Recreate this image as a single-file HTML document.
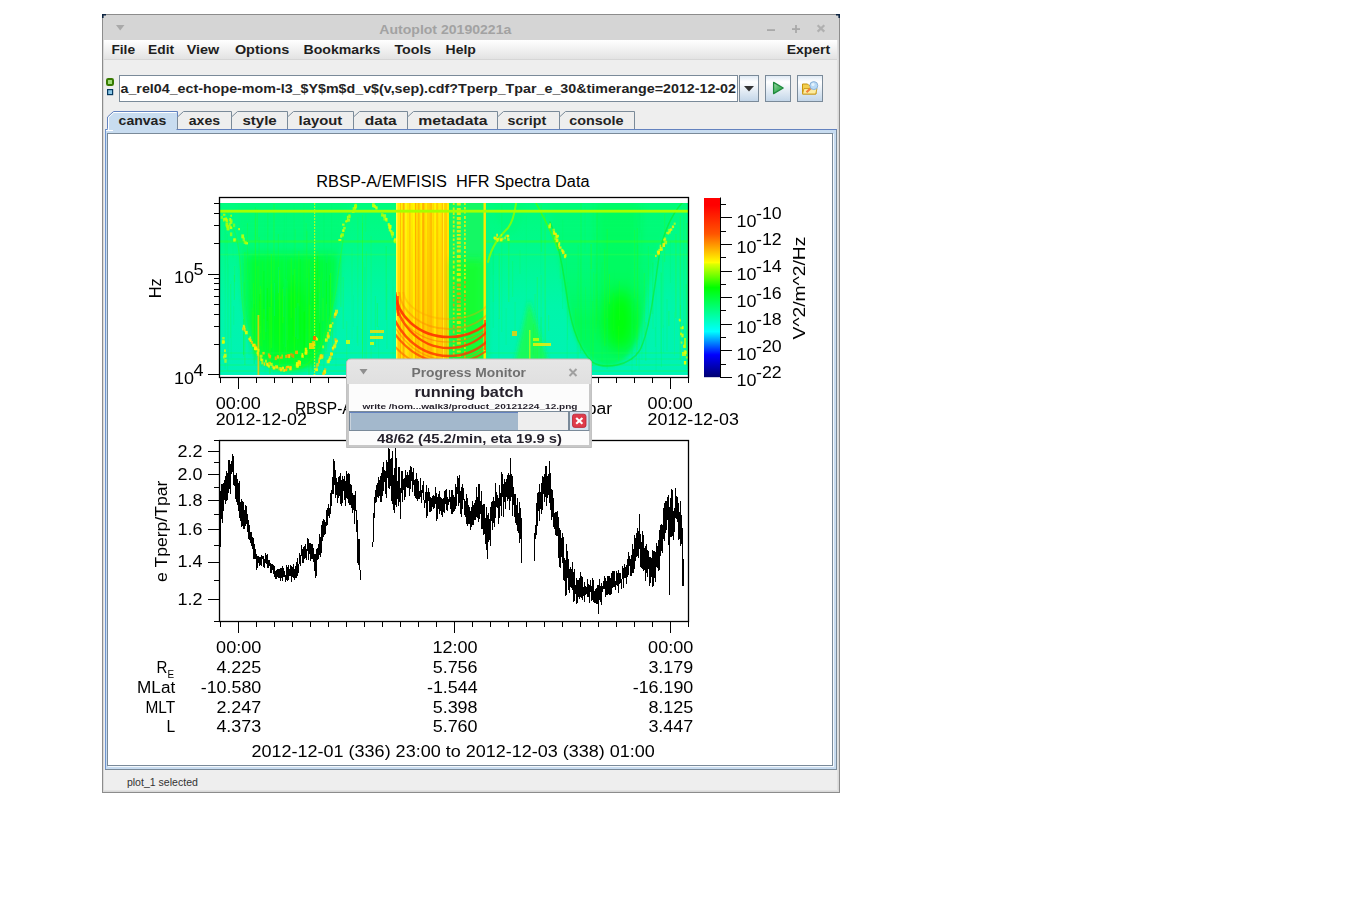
<!DOCTYPE html>
<html><head><meta charset="utf-8"><style>
html,body{margin:0;padding:0;background:#fff;width:1345px;height:916px;overflow:hidden}
svg{display:block}
text{font-family:"Liberation Sans",sans-serif;white-space:pre}
</style></head><body>
<svg width="1345" height="916" viewBox="0 0 1345 916" font-family="Liberation Sans, sans-serif"><defs>
<linearGradient id="menuG" x1="0" y1="0" x2="0" y2="1"><stop offset="0" stop-color="#ffffff"/><stop offset="1" stop-color="#e3e3e3"/></linearGradient>
<linearGradient id="btnG" x1="0" y1="0" x2="0" y2="1"><stop offset="0" stop-color="#dde8f3"/><stop offset="0.25" stop-color="#ffffff"/><stop offset="1" stop-color="#c2d5e8"/></linearGradient>
<linearGradient id="dlgT" x1="0" y1="0" x2="0" y2="1"><stop offset="0" stop-color="#e6e6e6"/><stop offset="1" stop-color="#cfcfcf"/></linearGradient>
<linearGradient id="cbar" x1="0" y1="0" x2="0" y2="1">
 <stop offset="0" stop-color="#ff0000"/><stop offset="0.04" stop-color="#ff0000"/>
 <stop offset="0.20" stop-color="#ff5500"/>
 <stop offset="0.36" stop-color="#ffff00"/>
 <stop offset="0.37" stop-color="#ddff00"/>
 <stop offset="0.50" stop-color="#00ff00"/>
 <stop offset="0.745" stop-color="#00ffff"/>
 <stop offset="0.875" stop-color="#0000ff"/>
 <stop offset="1" stop-color="#000070"/>
</linearGradient>
</defs>
<rect x="0" y="0" width="1345" height="916" fill="#ffffff" />
<rect x="102" y="14" width="738" height="779" fill="#8c8c8c" />
<rect x="103" y="15" width="736" height="777" fill="#d9d9d9" />
<rect x="104" y="40" width="734" height="751" fill="#eeeeee" />
<rect x="103" y="15" width="736" height="25" fill="#d5d5d5" />
<path d="M102 14 h4 v1.6 h-2.4 v2.4 h-1.6z" fill="#0c2340"/>
<path d="M840 14 h-4 v1.6 h2.4 v2.4 h1.6z" fill="#0c2340"/>
<path d="M116 25 L124.5 25 L120.2 30.5 Z" fill="#a9a9a9"/>
<text x="379.3" y="33.8" font-size="13" font-weight="bold" fill="#a2a2a2" text-anchor="start" textLength="132.0" lengthAdjust="spacingAndGlyphs" >Autoplot 20190221a</text>
<rect x="767" y="29.2" width="8" height="1.8" fill="#a9a9a9"/>
<rect x="792" y="28.2" width="8" height="1.8" fill="#a9a9a9"/><rect x="795.1" y="25" width="1.8" height="8" fill="#a9a9a9"/>
<path d="M817.6 25.2 L824.3 31.6 M824.3 25.2 L817.6 31.6" stroke="#b0b0b0" stroke-width="2.2"/>
<rect x="104" y="40" width="733" height="19" fill="url(#menuG)" />
<line x1="104" y1="59.5" x2="838" y2="59.5" stroke="#d6d6d6" stroke-width="1"/>
<text x="111.4" y="53.7" font-size="12.5" font-weight="bold" fill="#1e1e1e" text-anchor="start" textLength="23.7" lengthAdjust="spacingAndGlyphs" >File</text>
<text x="148.1" y="53.7" font-size="12.5" font-weight="bold" fill="#1e1e1e" text-anchor="start" textLength="26.0" lengthAdjust="spacingAndGlyphs" >Edit</text>
<text x="186.8" y="53.7" font-size="12.5" font-weight="bold" fill="#1e1e1e" text-anchor="start" textLength="32.5" lengthAdjust="spacingAndGlyphs" >View</text>
<text x="234.9" y="53.7" font-size="12.5" font-weight="bold" fill="#1e1e1e" text-anchor="start" textLength="54.5" lengthAdjust="spacingAndGlyphs" >Options</text>
<text x="303.5" y="53.7" font-size="12.5" font-weight="bold" fill="#1e1e1e" text-anchor="start" textLength="76.9" lengthAdjust="spacingAndGlyphs" >Bookmarks</text>
<text x="394.4" y="53.7" font-size="12.5" font-weight="bold" fill="#1e1e1e" text-anchor="start" textLength="36.9" lengthAdjust="spacingAndGlyphs" >Tools</text>
<text x="445.5" y="53.7" font-size="12.5" font-weight="bold" fill="#1e1e1e" text-anchor="start" textLength="30.4" lengthAdjust="spacingAndGlyphs" >Help</text>
<text x="786.7" y="53.7" font-size="12.5" font-weight="bold" fill="#1e1e1e" text-anchor="start" textLength="43.5" lengthAdjust="spacingAndGlyphs" >Expert</text>
<rect x="107" y="79" width="6" height="6" rx="1.2" fill="#a0dc78" stroke="#377a00" stroke-width="2"/>
<rect x="107.6" y="89.6" width="5" height="5" fill="#8cc8e8" stroke="#063a62" stroke-width="1.2"/>
<rect x="119.5" y="75.5" width="618" height="26" fill="#ffffff" stroke="#7a8a99" stroke-width="1"/>
<line x1="120.5" y1="77" x2="120.5" y2="101" stroke="#ffffff" stroke-width="1"/>
<text x="120.5" y="93.0" font-size="13" font-weight="bold" fill="#222222" text-anchor="start" textLength="615.5" lengthAdjust="spacingAndGlyphs" >a_rel04_ect-hope-mom-l3_$Y$m$d_v$(v,sep).cdf?Tperp_Tpar_e_30&amp;timerange=2012-12-02</text>
<rect x="739.5" y="75.5" width="19" height="26" fill="url(#btnG)" stroke="#7a8a99" stroke-width="1"/>
<path d="M744 86 L754 86 L749 91.5 Z" fill="#333333"/>
<rect x="765.5" y="75.5" width="25" height="26" fill="url(#btnG)" stroke="#7a8a99" stroke-width="1"/>
<linearGradient id="playG" x1="0" y1="0" x2="1" y2="1"><stop offset="0" stop-color="#a8dcb0"/><stop offset="0.5" stop-color="#4fb866"/><stop offset="1" stop-color="#2f9a48"/></linearGradient>
<path d="M773.6 82.4 L783.2 88.0 L773.6 93.6 Z" fill="url(#playG)" stroke="#1e8a3c" stroke-width="1.3" stroke-linejoin="round"/>
<rect x="797.5" y="75.5" width="25" height="26" fill="url(#btnG)" stroke="#7a8a99" stroke-width="1"/>
<path d="M802.5 84 h5 l1.5 1.5 h7 v8.5 h-13.5 z" fill="#f3cf50" stroke="#c8960e" stroke-width="1"/>
<path d="M804 88.5 h13 l-1.3 5.5 h-13.2 z" fill="#fdeca0" stroke="#c8960e" stroke-width="0.8"/>
<line x1="806.5" y1="92.2" x2="811" y2="88" stroke="#f0823a" stroke-width="2.2"/>
<circle cx="813.8" cy="85.6" r="4" fill="#b8daf6" stroke="#86acd2" stroke-width="0.9"/>
<circle cx="813" cy="84.6" r="1.6" fill="#e4f2fd"/>
<path d="M107.5 130 L107.5 117 L113.5 111.5 L177.5 111.5 L177.5 130" fill="#c8dcf0" stroke="#6382bf" stroke-width="1"/>
<text x="118.6" y="124.8" font-size="12.5" font-weight="bold" fill="#222222" text-anchor="start" textLength="47.6" lengthAdjust="spacingAndGlyphs" >canvas</text>
<path d="M177.5 130 L177.5 117 L183.5 111.5 L231.5 111.5 L231.5 130" fill="#eeeeee" stroke="#7a8a99" stroke-width="1"/>
<text x="188.8" y="124.8" font-size="12.5" font-weight="bold" fill="#222222" text-anchor="start" textLength="31.3" lengthAdjust="spacingAndGlyphs" >axes</text>
<path d="M231.5 130 L231.5 117 L237.5 111.5 L287.5 111.5 L287.5 130" fill="#eeeeee" stroke="#7a8a99" stroke-width="1"/>
<text x="242.4" y="124.8" font-size="12.5" font-weight="bold" fill="#222222" text-anchor="start" textLength="34.3" lengthAdjust="spacingAndGlyphs" >style</text>
<path d="M287.5 130 L287.5 117 L293.5 111.5 L353.5 111.5 L353.5 130" fill="#eeeeee" stroke="#7a8a99" stroke-width="1"/>
<text x="298.6" y="124.8" font-size="12.5" font-weight="bold" fill="#222222" text-anchor="start" textLength="43.6" lengthAdjust="spacingAndGlyphs" >layout</text>
<path d="M353.5 130 L353.5 117 L359.5 111.5 L407.5 111.5 L407.5 130" fill="#eeeeee" stroke="#7a8a99" stroke-width="1"/>
<text x="364.8" y="124.8" font-size="12.5" font-weight="bold" fill="#222222" text-anchor="start" textLength="31.9" lengthAdjust="spacingAndGlyphs" >data</text>
<path d="M407.5 130 L407.5 117 L413.5 111.5 L497.5 111.5 L497.5 130" fill="#eeeeee" stroke="#7a8a99" stroke-width="1"/>
<text x="418.3" y="124.8" font-size="12.5" font-weight="bold" fill="#222222" text-anchor="start" textLength="69.2" lengthAdjust="spacingAndGlyphs" >metadata</text>
<path d="M497.5 130 L497.5 117 L503.5 111.5 L559.5 111.5 L559.5 130" fill="#eeeeee" stroke="#7a8a99" stroke-width="1"/>
<text x="507.5" y="124.8" font-size="12.5" font-weight="bold" fill="#222222" text-anchor="start" textLength="38.7" lengthAdjust="spacingAndGlyphs" >script</text>
<path d="M559.5 130 L559.5 117 L565.5 111.5 L634.5 111.5 L634.5 130" fill="#eeeeee" stroke="#7a8a99" stroke-width="1"/>
<text x="569.2" y="124.8" font-size="12.5" font-weight="bold" fill="#222222" text-anchor="start" textLength="54.3" lengthAdjust="spacingAndGlyphs" >console</text>
<rect x="105.5" y="129.5" width="731" height="640" fill="#c8dcf0" stroke="#7a8a99" stroke-width="1"/>
<line x1="105" y1="129.5" x2="837" y2="129.5" stroke="#6382bf" stroke-width="1"/>
<line x1="105.5" y1="129" x2="105.5" y2="769" stroke="#6f95d0" stroke-width="1"/>
<rect x="107.5" y="128.5" width="69" height="2" fill="#c8dcf0" />
<path d="M108.5 130.5 L108.5 117.5 L113.8 112.5 L176.5 112.5" fill="none" stroke="#ffffff" stroke-width="1"/>
<line x1="106" y1="130.5" x2="113" y2="130.5" stroke="#ffffff" stroke-width="1"/>
<rect x="107.5" y="133.5" width="725" height="632" fill="#ffffff" stroke="#7a8a99" stroke-width="1"/>
<line x1="108" y1="766.5" x2="834" y2="766.5" stroke="#f4f8fc" stroke-width="1"/>
<line x1="833.5" y1="134" x2="833.5" y2="767" stroke="#f4f8fc" stroke-width="1"/>
<rect x="837" y="40" width="1" height="751" fill="#e2e2e2" />
<rect x="104" y="790" width="734" height="1" fill="#e2e2e2" />
<text x="126.9" y="786.0" font-size="11" font-weight="normal" fill="#333333" text-anchor="start" textLength="71.0" lengthAdjust="spacingAndGlyphs" >plot_1 selected</text>
<text x="316.3" y="186.9" font-size="16" font-weight="normal" fill="#000" text-anchor="start" textLength="273.2" lengthAdjust="spacingAndGlyphs" >RBSP-A/EMFISIS  HFR Spectra Data</text>
<g id="spec">
<defs>
<clipPath id="specClip"><rect x="220" y="203" width="468" height="172"/></clipPath>
<clipPath id="bandClip"><rect x="396" y="292" width="90" height="83"/></clipPath>
<linearGradient id="bgG" x1="0" y1="203" x2="0" y2="375" gradientUnits="userSpaceOnUse">
 <stop offset="0" stop-color="rgb(0,252,125)"/><stop offset="0.25" stop-color="rgb(0,250,140)"/>
 <stop offset="0.6" stop-color="rgb(0,246,170)"/><stop offset="1" stop-color="rgb(0,242,182)"/></linearGradient>
<linearGradient id="uG" x1="0" y1="203" x2="0" y2="375" gradientUnits="userSpaceOnUse">
 <stop offset="0" stop-color="rgb(0,252,90)" stop-opacity="0.15"/><stop offset="0.35" stop-color="rgb(0,252,85)" stop-opacity="0.45"/>
 <stop offset="0.7" stop-color="rgb(0,252,70)" stop-opacity="0.8"/><stop offset="1" stop-color="rgb(0,252,80)" stop-opacity="0.75"/></linearGradient>
<linearGradient id="bandG" x1="0" y1="203" x2="0" y2="375" gradientUnits="userSpaceOnUse">
 <stop offset="0" stop-color="#ffef00"/><stop offset="0.45" stop-color="#ffdc00"/><stop offset="1" stop-color="#ffc400"/></linearGradient>
<filter id="bl2" x="-20%" y="-20%" width="140%" height="140%"><feGaussianBlur stdDeviation="2"/></filter>
<filter id="bl4" x="-30%" y="-30%" width="160%" height="160%"><feGaussianBlur stdDeviation="4"/></filter>
<filter id="bl8" x="-50%" y="-50%" width="200%" height="200%"><feGaussianBlur stdDeviation="8"/></filter>
</defs>
<g clip-path="url(#specClip)">
<rect x="220" y="203" width="468" height="172" fill="url(#bgG)"/>
<g filter="url(#bl2)">
<path d="M238 203 C241 260, 240 320, 256 352 C268 372, 300 376, 318 362 C330 340, 337 290, 346 203 Z" fill="url(#uG)"/>
<path d="M548 203 C558 240, 564 300, 575 335 C585 360, 600 368, 612 366 C630 362, 640 340, 646 300 C652 260, 662 230, 682 203 Z" fill="url(#uG)"/>
<path d="M492 203 C500 240, 520 250, 525 203 Z" fill="rgb(0,252,110)" opacity="0.3"/>
<path d="M529 300 L552 375 L512 375 Z" fill="rgb(40,255,40)" opacity="0.6"/>
</g>
<g filter="url(#bl4)">
<path d="M596 203 L640 203 C638 260, 636 300, 628 345 C618 352, 606 348, 602 320 C599 280, 597 240, 596 203 Z" fill="rgb(0,255,40)" opacity="0.3"/>
<path d="M246 255 L336 255 C334 320, 326 350, 312 364 C296 374, 268 372, 256 352 C250 320, 247 290, 246 255 Z" fill="rgb(0,255,30)" opacity="0.65"/>
</g>
<g filter="url(#bl8)">
<ellipse cx="620" cy="320" rx="14" ry="30" fill="rgb(0,255,0)" opacity="0.9"/>
<ellipse cx="288" cy="320" rx="22" ry="36" fill="rgb(0,255,0)" opacity="0.45"/>
</g>
<rect x="220" y="352" width="468" height="2" fill="rgb(20,255,80)" opacity="0.25"/>
<rect x="220" y="358" width="468" height="2" fill="rgb(20,255,80)" opacity="0.2"/>
<rect x="220" y="364" width="468" height="2" fill="rgb(20,255,80)" opacity="0.25"/>
<rect x="220" y="370" width="468" height="2" fill="rgb(20,255,80)" opacity="0.3"/>
<rect x="220" y="240.3" width="468" height="2.4" fill="rgb(50,255,40)" opacity="0.5"/>
<rect x="220" y="253.8" width="468" height="1.6" fill="rgb(60,255,60)" opacity="0.28"/>
<rect x="652.5" y="262" width="1" height="67" fill="rgb(60,255,0)" opacity="0.15"/>
<rect x="596.2" y="263" width="1" height="77" fill="rgb(30,255,30)" opacity="0.12"/>
<rect x="362.0" y="215" width="1" height="137" fill="rgb(60,255,0)" opacity="0.26"/>
<rect x="498.7" y="253" width="1" height="66" fill="rgb(60,255,0)" opacity="0.25"/>
<rect x="293.7" y="205" width="1" height="100" fill="rgb(30,255,30)" opacity="0.11"/>
<rect x="631.6" y="279" width="1" height="82" fill="rgb(0,250,100)" opacity="0.21"/>
<rect x="614.3" y="269" width="1" height="77" fill="rgb(0,250,100)" opacity="0.10"/>
<rect x="259.8" y="286" width="1" height="47" fill="rgb(60,255,0)" opacity="0.35"/>
<rect x="613.2" y="293" width="1" height="38" fill="rgb(30,255,30)" opacity="0.23"/>
<rect x="233.9" y="275" width="1" height="25" fill="rgb(30,255,30)" opacity="0.31"/>
<rect x="668.4" y="311" width="1" height="15" fill="rgb(30,255,30)" opacity="0.33"/>
<rect x="244.5" y="251" width="1" height="96" fill="rgb(0,250,100)" opacity="0.12"/>
<rect x="514.6" y="302" width="1" height="32" fill="rgb(30,255,30)" opacity="0.18"/>
<rect x="227.1" y="255" width="1" height="116" fill="rgb(30,255,30)" opacity="0.16"/>
<rect x="267.3" y="211" width="1" height="138" fill="rgb(30,255,30)" opacity="0.27"/>
<rect x="308.2" y="268" width="1" height="111" fill="rgb(30,255,30)" opacity="0.20"/>
<rect x="683.3" y="203" width="1" height="155" fill="rgb(60,255,0)" opacity="0.18"/>
<rect x="634.1" y="230" width="1" height="68" fill="rgb(60,255,0)" opacity="0.26"/>
<rect x="267.0" y="329" width="1" height="23" fill="rgb(0,250,100)" opacity="0.10"/>
<rect x="505.6" y="308" width="1" height="37" fill="rgb(30,255,30)" opacity="0.12"/>
<rect x="492.7" y="234" width="1" height="94" fill="rgb(0,250,100)" opacity="0.26"/>
<rect x="279.5" y="278" width="1" height="88" fill="rgb(30,255,30)" opacity="0.32"/>
<rect x="305.6" y="223" width="1" height="144" fill="rgb(60,255,0)" opacity="0.16"/>
<rect x="308.8" y="297" width="1" height="79" fill="rgb(30,255,30)" opacity="0.27"/>
<rect x="256.7" y="209" width="1" height="32" fill="rgb(60,255,0)" opacity="0.34"/>
<rect x="331.6" y="292" width="1" height="34" fill="rgb(60,255,0)" opacity="0.22"/>
<rect x="654.9" y="327" width="1" height="20" fill="rgb(0,250,100)" opacity="0.24"/>
<rect x="618.9" y="281" width="1" height="39" fill="rgb(30,255,30)" opacity="0.29"/>
<rect x="252.4" y="255" width="1" height="42" fill="rgb(30,255,30)" opacity="0.14"/>
<rect x="392.6" y="276" width="1" height="27" fill="rgb(0,250,100)" opacity="0.13"/>
<rect x="374.9" y="296" width="1" height="51" fill="rgb(30,255,30)" opacity="0.25"/>
<rect x="652.2" y="263" width="1" height="51" fill="rgb(0,250,100)" opacity="0.34"/>
<rect x="229.9" y="284" width="1" height="54" fill="rgb(60,255,0)" opacity="0.18"/>
<rect x="283.9" y="212" width="1" height="84" fill="rgb(0,250,100)" opacity="0.28"/>
<rect x="641.3" y="297" width="1" height="63" fill="rgb(0,250,100)" opacity="0.19"/>
<rect x="540.6" y="317" width="1" height="56" fill="rgb(0,250,100)" opacity="0.34"/>
<rect x="234.2" y="266" width="1" height="16" fill="rgb(60,255,0)" opacity="0.20"/>
<rect x="492.7" y="280" width="1" height="22" fill="rgb(60,255,0)" opacity="0.13"/>
<rect x="340.4" y="256" width="1" height="51" fill="rgb(60,255,0)" opacity="0.27"/>
<rect x="365.2" y="214" width="1" height="18" fill="rgb(60,255,0)" opacity="0.13"/>
<rect x="585.0" y="287" width="1" height="53" fill="rgb(30,255,30)" opacity="0.19"/>
<rect x="287.0" y="281" width="1" height="59" fill="rgb(0,250,100)" opacity="0.26"/>
<rect x="637.3" y="245" width="1" height="95" fill="rgb(30,255,30)" opacity="0.26"/>
<rect x="596.1" y="299" width="1" height="28" fill="rgb(30,255,30)" opacity="0.20"/>
<rect x="492.9" y="243" width="1" height="32" fill="rgb(0,250,100)" opacity="0.19"/>
<rect x="639.2" y="208" width="1" height="25" fill="rgb(0,250,100)" opacity="0.31"/>
<rect x="272.8" y="263" width="1" height="110" fill="rgb(0,250,100)" opacity="0.20"/>
<rect x="534.6" y="294" width="1" height="75" fill="rgb(60,255,0)" opacity="0.21"/>
<rect x="254.9" y="207" width="1" height="153" fill="rgb(30,255,30)" opacity="0.27"/>
<rect x="351.5" y="248" width="1" height="91" fill="rgb(60,255,0)" opacity="0.10"/>
<rect x="283.6" y="261" width="1" height="18" fill="rgb(0,250,100)" opacity="0.16"/>
<rect x="285.9" y="209" width="1" height="113" fill="rgb(0,250,100)" opacity="0.13"/>
<rect x="519.5" y="250" width="1" height="24" fill="rgb(30,255,30)" opacity="0.15"/>
<rect x="303.6" y="204" width="1" height="91" fill="rgb(60,255,0)" opacity="0.11"/>
<rect x="326.0" y="302" width="1" height="49" fill="rgb(60,255,0)" opacity="0.23"/>
<rect x="686.5" y="223" width="1" height="135" fill="rgb(60,255,0)" opacity="0.33"/>
<rect x="260.8" y="321" width="1" height="46" fill="rgb(30,255,30)" opacity="0.21"/>
<rect x="312.1" y="316" width="1" height="15" fill="rgb(60,255,0)" opacity="0.24"/>
<rect x="631.5" y="304" width="1" height="72" fill="rgb(0,250,100)" opacity="0.18"/>
<rect x="679.7" y="216" width="1" height="144" fill="rgb(60,255,0)" opacity="0.33"/>
<rect x="277.8" y="234" width="1" height="66" fill="rgb(30,255,30)" opacity="0.34"/>
<rect x="590.1" y="244" width="1" height="125" fill="rgb(30,255,30)" opacity="0.19"/>
<rect x="258.7" y="259" width="1" height="73" fill="rgb(0,250,100)" opacity="0.22"/>
<rect x="233.3" y="306" width="1" height="19" fill="rgb(30,255,30)" opacity="0.14"/>
<rect x="376.8" y="303" width="1" height="24" fill="rgb(30,255,30)" opacity="0.35"/>
<rect x="641.5" y="269" width="1" height="80" fill="rgb(0,250,100)" opacity="0.34"/>
<rect x="664.2" y="214" width="1" height="48" fill="rgb(60,255,0)" opacity="0.24"/>
<rect x="609.0" y="274" width="1" height="30" fill="rgb(60,255,0)" opacity="0.31"/>
<rect x="365.9" y="251" width="1" height="111" fill="rgb(60,255,0)" opacity="0.15"/>
<rect x="618.2" y="326" width="1" height="35" fill="rgb(60,255,0)" opacity="0.22"/>
<rect x="273.5" y="204" width="1" height="76" fill="rgb(60,255,0)" opacity="0.34"/>
<rect x="594.9" y="274" width="1" height="59" fill="rgb(60,255,0)" opacity="0.14"/>
<rect x="655.6" y="261" width="1" height="110" fill="rgb(0,250,100)" opacity="0.17"/>
<rect x="279.4" y="258" width="1" height="102" fill="rgb(0,250,100)" opacity="0.23"/>
<rect x="270.8" y="256" width="1" height="18" fill="rgb(0,250,100)" opacity="0.13"/>
<rect x="584.7" y="206" width="1" height="46" fill="rgb(30,255,30)" opacity="0.10"/>
<rect x="352.9" y="295" width="1" height="32" fill="rgb(0,250,100)" opacity="0.13"/>
<rect x="562.1" y="219" width="1" height="90" fill="rgb(0,250,100)" opacity="0.28"/>
<rect x="548.2" y="315" width="1" height="16" fill="rgb(60,255,0)" opacity="0.20"/>
<rect x="294.8" y="229" width="1" height="101" fill="rgb(60,255,0)" opacity="0.15"/>
<rect x="321.2" y="272" width="1" height="70" fill="rgb(30,255,30)" opacity="0.16"/>
<rect x="566.7" y="306" width="1" height="68" fill="rgb(0,250,100)" opacity="0.25"/>
<rect x="636.8" y="228" width="1" height="122" fill="rgb(30,255,30)" opacity="0.32"/>
<rect x="282.7" y="233" width="1" height="111" fill="rgb(0,250,100)" opacity="0.20"/>
<rect x="660.5" y="272" width="1" height="81" fill="rgb(30,255,30)" opacity="0.20"/>
<rect x="540.7" y="205" width="1" height="47" fill="rgb(60,255,0)" opacity="0.19"/>
<rect x="604.2" y="249" width="1" height="97" fill="rgb(60,255,0)" opacity="0.29"/>
<rect x="540.9" y="227" width="1" height="25" fill="rgb(30,255,30)" opacity="0.11"/>
<rect x="576.6" y="281" width="1" height="91" fill="rgb(0,250,100)" opacity="0.14"/>
<rect x="306.4" y="229" width="1" height="129" fill="rgb(0,250,100)" opacity="0.33"/>
<rect x="264.6" y="211" width="1" height="162" fill="rgb(0,250,100)" opacity="0.12"/>
<rect x="265.3" y="253" width="1" height="63" fill="rgb(0,250,100)" opacity="0.21"/>
<rect x="501.2" y="205" width="1" height="127" fill="rgb(30,255,30)" opacity="0.15"/>
<rect x="566.0" y="254" width="1" height="37" fill="rgb(30,255,30)" opacity="0.12"/>
<rect x="590.8" y="244" width="1" height="25" fill="rgb(60,255,0)" opacity="0.32"/>
<rect x="645.3" y="322" width="1" height="39" fill="rgb(30,255,30)" opacity="0.23"/>
<rect x="679.9" y="305" width="1" height="30" fill="rgb(30,255,30)" opacity="0.29"/>
<rect x="584.1" y="306" width="1" height="39" fill="rgb(0,250,100)" opacity="0.32"/>
<rect x="545.2" y="300" width="1" height="64" fill="rgb(0,250,100)" opacity="0.15"/>
<rect x="306.5" y="304" width="1" height="33" fill="rgb(30,255,30)" opacity="0.10"/>
<rect x="386.4" y="284" width="1" height="65" fill="rgb(30,255,30)" opacity="0.17"/>
<rect x="669.9" y="241" width="1" height="42" fill="rgb(0,250,100)" opacity="0.24"/>
<rect x="687.9" y="285" width="1" height="71" fill="rgb(0,250,100)" opacity="0.35"/>
<rect x="230.7" y="281" width="1" height="77" fill="rgb(0,250,100)" opacity="0.21"/>
<rect x="576.3" y="285" width="1" height="16" fill="rgb(0,250,100)" opacity="0.16"/>
<rect x="643.8" y="273" width="1" height="62" fill="rgb(60,255,0)" opacity="0.24"/>
<rect x="685.7" y="284" width="1" height="81" fill="rgb(30,255,30)" opacity="0.24"/>
<rect x="532.8" y="324" width="1" height="31" fill="rgb(30,255,30)" opacity="0.20"/>
<rect x="674.0" y="312" width="1" height="44" fill="rgb(60,255,0)" opacity="0.11"/>
<rect x="662.4" y="256" width="1" height="72" fill="rgb(60,255,0)" opacity="0.18"/>
<rect x="346.2" y="321" width="1" height="44" fill="rgb(60,255,0)" opacity="0.17"/>
<rect x="226.6" y="234" width="1" height="21" fill="rgb(30,255,30)" opacity="0.20"/>
<rect x="540.3" y="210" width="1" height="64" fill="rgb(0,250,100)" opacity="0.11"/>
<rect x="682.7" y="323" width="1" height="18" fill="rgb(30,255,30)" opacity="0.21"/>
<rect x="675.4" y="234" width="1" height="84" fill="rgb(60,255,0)" opacity="0.33"/>
<rect x="287.6" y="325" width="1" height="25" fill="rgb(60,255,0)" opacity="0.13"/>
<rect x="512.1" y="261" width="1" height="36" fill="rgb(30,255,30)" opacity="0.19"/>
<rect x="292.4" y="249" width="1" height="31" fill="rgb(0,250,100)" opacity="0.21"/>
<rect x="342.7" y="277" width="1" height="52" fill="rgb(60,255,0)" opacity="0.23"/>
<rect x="686.9" y="324" width="1" height="45" fill="rgb(30,255,30)" opacity="0.22"/>
<rect x="364.4" y="267" width="1" height="98" fill="rgb(0,250,100)" opacity="0.17"/>
<rect x="540.6" y="275" width="1" height="68" fill="rgb(60,255,0)" opacity="0.17"/>
<rect x="332.1" y="324" width="1" height="36" fill="rgb(60,255,0)" opacity="0.33"/>
<rect x="631.3" y="208" width="1" height="25" fill="rgb(0,250,100)" opacity="0.16"/>
<rect x="232.6" y="208" width="1" height="50" fill="rgb(0,250,100)" opacity="0.12"/>
<rect x="260.5" y="289" width="1" height="57" fill="rgb(60,255,0)" opacity="0.35"/>
<rect x="385.7" y="246" width="1" height="74" fill="rgb(30,255,30)" opacity="0.31"/>
<rect x="254.8" y="218" width="1" height="134" fill="rgb(60,255,0)" opacity="0.31"/>
<rect x="579.9" y="259" width="1" height="94" fill="rgb(0,250,100)" opacity="0.30"/>
<rect x="392.7" y="286" width="1" height="93" fill="rgb(0,250,100)" opacity="0.17"/>
<rect x="575.2" y="308" width="1" height="25" fill="rgb(60,255,0)" opacity="0.19"/>
<rect x="265.4" y="314" width="1" height="19" fill="rgb(30,255,30)" opacity="0.21"/>
<rect x="601.6" y="262" width="1" height="100" fill="rgb(30,255,30)" opacity="0.12"/>
<rect x="319.8" y="287" width="1" height="21" fill="rgb(0,250,100)" opacity="0.22"/>
<rect x="577.6" y="245" width="1" height="121" fill="rgb(30,255,30)" opacity="0.19"/>
<rect x="559.8" y="250" width="1" height="29" fill="rgb(60,255,0)" opacity="0.21"/>
<rect x="498.4" y="318" width="1" height="48" fill="rgb(0,250,100)" opacity="0.21"/>
<rect x="595.8" y="242" width="1" height="54" fill="rgb(0,250,100)" opacity="0.34"/>
<rect x="561.5" y="269" width="1" height="23" fill="rgb(0,250,100)" opacity="0.11"/>
<rect x="536.8" y="277" width="1" height="85" fill="rgb(60,255,0)" opacity="0.24"/>
<rect x="593.0" y="272" width="1" height="93" fill="rgb(60,255,0)" opacity="0.14"/>
<rect x="262.0" y="261" width="1" height="104" fill="rgb(30,255,30)" opacity="0.16"/>
<rect x="247.0" y="223" width="1" height="57" fill="rgb(30,255,30)" opacity="0.26"/>
<rect x="596.4" y="211" width="1" height="99" fill="rgb(60,255,0)" opacity="0.12"/>
<rect x="258.2" y="297" width="1" height="76" fill="rgb(30,255,30)" opacity="0.11"/>
<rect x="525.9" y="215" width="1" height="137" fill="rgb(0,250,100)" opacity="0.16"/>
<rect x="323.2" y="300" width="1" height="49" fill="rgb(0,250,100)" opacity="0.20"/>
<rect x="378.1" y="326" width="1" height="41" fill="rgb(0,250,100)" opacity="0.22"/>
<rect x="596.6" y="212" width="1" height="109" fill="rgb(30,255,30)" opacity="0.20"/>
<rect x="606.7" y="288" width="1" height="81" fill="rgb(0,250,100)" opacity="0.31"/>
<rect x="635.9" y="325" width="1" height="41" fill="rgb(60,255,0)" opacity="0.19"/>
<rect x="224.7" y="217" width="1" height="152" fill="rgb(30,255,30)" opacity="0.16"/>
<rect x="295.9" y="284" width="1" height="71" fill="rgb(0,250,100)" opacity="0.15"/>
<rect x="356.7" y="326" width="1" height="17" fill="rgb(0,250,100)" opacity="0.28"/>
<rect x="362.0" y="223" width="1" height="146" fill="rgb(30,255,30)" opacity="0.29"/>
<rect x="228.0" y="264" width="1" height="96" fill="rgb(0,250,100)" opacity="0.13"/>
<rect x="306.4" y="231" width="1" height="47" fill="rgb(60,255,0)" opacity="0.22"/>
<rect x="638.6" y="254" width="1" height="116" fill="rgb(0,250,100)" opacity="0.26"/>
<rect x="660.9" y="273" width="1" height="94" fill="rgb(0,250,100)" opacity="0.32"/>
<rect x="647.9" y="246" width="1" height="80" fill="rgb(30,255,30)" opacity="0.22"/>
<rect x="323.4" y="209" width="1" height="163" fill="rgb(0,250,100)" opacity="0.34"/>
<rect x="591.9" y="301" width="1" height="65" fill="rgb(30,255,30)" opacity="0.26"/>
<rect x="331.2" y="204" width="1" height="91" fill="rgb(0,250,100)" opacity="0.21"/>
<rect x="335.4" y="257" width="1" height="110" fill="rgb(0,250,100)" opacity="0.14"/>
<rect x="370.6" y="236" width="1" height="127" fill="rgb(60,255,0)" opacity="0.13"/>
<rect x="567.1" y="282" width="1" height="58" fill="rgb(30,255,30)" opacity="0.14"/>
<rect x="580.5" y="203" width="1" height="148" fill="rgb(30,255,30)" opacity="0.31"/>
<rect x="258.6" y="237" width="1" height="107" fill="rgb(30,255,30)" opacity="0.32"/>
<rect x="544.6" y="214" width="1" height="128" fill="rgb(60,255,0)" opacity="0.31"/>
<rect x="362.1" y="303" width="1" height="41" fill="rgb(60,255,0)" opacity="0.12"/>
<rect x="606.7" y="229" width="1" height="89" fill="rgb(60,255,0)" opacity="0.22"/>
<rect x="663.0" y="325" width="1" height="28" fill="rgb(0,250,100)" opacity="0.12"/>
<rect x="363.1" y="262" width="1" height="88" fill="rgb(0,250,100)" opacity="0.12"/>
<rect x="285.8" y="288" width="1" height="67" fill="rgb(60,255,0)" opacity="0.34"/>
<rect x="608.3" y="286" width="1" height="16" fill="rgb(0,250,100)" opacity="0.28"/>
<rect x="357.3" y="217" width="1" height="129" fill="rgb(60,255,0)" opacity="0.15"/>
<rect x="508.3" y="240" width="1" height="62" fill="rgb(60,255,0)" opacity="0.29"/>
<rect x="666.5" y="299" width="1" height="52" fill="rgb(30,255,30)" opacity="0.16"/>
<rect x="259.2" y="301" width="1" height="38" fill="rgb(60,255,0)" opacity="0.37"/>
<rect x="309.5" y="273" width="1" height="88" fill="rgb(0,255,0)" opacity="0.23"/>
<rect x="299.7" y="259" width="1" height="81" fill="rgb(0,255,0)" opacity="0.25"/>
<rect x="278.6" y="309" width="1" height="48" fill="rgb(0,255,0)" opacity="0.23"/>
<rect x="243.1" y="319" width="1" height="36" fill="rgb(0,255,0)" opacity="0.30"/>
<rect x="319.0" y="315" width="1" height="26" fill="rgb(0,255,0)" opacity="0.43"/>
<rect x="318.8" y="277" width="1" height="46" fill="rgb(60,255,0)" opacity="0.39"/>
<rect x="309.8" y="293" width="1" height="40" fill="rgb(0,255,0)" opacity="0.40"/>
<rect x="298.4" y="251" width="1" height="55" fill="rgb(60,255,0)" opacity="0.29"/>
<rect x="282.4" y="289" width="1" height="34" fill="rgb(60,255,0)" opacity="0.44"/>
<rect x="319.2" y="293" width="1" height="30" fill="rgb(0,240,120)" opacity="0.47"/>
<rect x="292.6" y="275" width="1" height="61" fill="rgb(0,255,0)" opacity="0.37"/>
<rect x="259.0" y="315" width="1" height="61" fill="rgb(0,240,120)" opacity="0.45"/>
<rect x="258.9" y="316" width="1" height="45" fill="rgb(0,255,0)" opacity="0.43"/>
<rect x="253.1" y="283" width="1" height="50" fill="rgb(60,255,0)" opacity="0.30"/>
<rect x="329.2" y="275" width="1" height="57" fill="rgb(0,255,0)" opacity="0.34"/>
<rect x="310.1" y="267" width="1" height="71" fill="rgb(0,240,120)" opacity="0.37"/>
<rect x="293.8" y="269" width="1" height="100" fill="rgb(60,255,0)" opacity="0.38"/>
<rect x="251.8" y="308" width="1" height="34" fill="rgb(60,255,0)" opacity="0.27"/>
<rect x="295.1" y="308" width="1" height="29" fill="rgb(0,240,120)" opacity="0.44"/>
<rect x="283.6" y="278" width="1" height="81" fill="rgb(0,240,120)" opacity="0.24"/>
<rect x="312.6" y="309" width="1" height="62" fill="rgb(0,240,120)" opacity="0.38"/>
<rect x="317.2" y="251" width="1" height="41" fill="rgb(60,255,0)" opacity="0.21"/>
<rect x="290.7" y="258" width="1" height="60" fill="rgb(60,255,0)" opacity="0.36"/>
<rect x="265.3" y="290" width="1" height="42" fill="rgb(0,240,120)" opacity="0.44"/>
<rect x="309.3" y="305" width="1" height="41" fill="rgb(60,255,0)" opacity="0.38"/>
<rect x="285.1" y="279" width="1" height="68" fill="rgb(0,240,120)" opacity="0.37"/>
<rect x="279.1" y="270" width="1" height="97" fill="rgb(60,255,0)" opacity="0.45"/>
<rect x="322.1" y="279" width="1" height="54" fill="rgb(0,240,120)" opacity="0.23"/>
<rect x="330.1" y="273" width="1" height="63" fill="rgb(60,255,0)" opacity="0.47"/>
<rect x="270.8" y="254" width="1" height="94" fill="rgb(60,255,0)" opacity="0.42"/>
<rect x="297.4" y="303" width="1" height="36" fill="rgb(0,240,120)" opacity="0.46"/>
<rect x="263.5" y="309" width="1" height="31" fill="rgb(60,255,0)" opacity="0.49"/>
<rect x="285.7" y="257" width="1" height="110" fill="rgb(0,240,120)" opacity="0.29"/>
<rect x="278.0" y="267" width="1" height="26" fill="rgb(0,240,120)" opacity="0.49"/>
<rect x="303.9" y="311" width="1" height="39" fill="rgb(0,255,0)" opacity="0.27"/>
<rect x="311.7" y="290" width="1" height="80" fill="rgb(0,255,0)" opacity="0.36"/>
<rect x="252.5" y="312" width="1" height="45" fill="rgb(60,255,0)" opacity="0.20"/>
<rect x="263.4" y="271" width="1" height="48" fill="rgb(0,255,0)" opacity="0.33"/>
<rect x="283.2" y="287" width="1" height="30" fill="rgb(0,240,120)" opacity="0.38"/>
<rect x="244.4" y="252" width="1" height="113" fill="rgb(60,255,0)" opacity="0.30"/>
<rect x="253.7" y="304" width="1" height="60" fill="rgb(0,255,0)" opacity="0.26"/>
<rect x="322.5" y="298" width="1" height="23" fill="rgb(60,255,0)" opacity="0.45"/>
<rect x="274.0" y="283" width="1" height="33" fill="rgb(0,240,120)" opacity="0.50"/>
<rect x="259.4" y="294" width="1" height="32" fill="rgb(0,255,0)" opacity="0.40"/>
<rect x="269.4" y="307" width="1" height="67" fill="rgb(60,255,0)" opacity="0.46"/>
<rect x="308.5" y="259" width="1" height="87" fill="rgb(60,255,0)" opacity="0.32"/>
<rect x="256.3" y="310" width="1" height="26" fill="rgb(0,240,120)" opacity="0.26"/>
<rect x="257.4" y="266" width="1" height="79" fill="rgb(60,255,0)" opacity="0.31"/>
<rect x="303.6" y="312" width="1" height="46" fill="rgb(0,255,0)" opacity="0.49"/>
<rect x="326.0" y="263" width="1" height="41" fill="rgb(0,255,0)" opacity="0.39"/>
<rect x="248.6" y="319" width="1" height="36" fill="rgb(0,240,120)" opacity="0.22"/>
<rect x="327.1" y="250" width="1" height="82" fill="rgb(0,240,120)" opacity="0.28"/>
<rect x="317.1" y="256" width="1" height="48" fill="rgb(0,255,0)" opacity="0.27"/>
<rect x="266.8" y="288" width="1" height="33" fill="rgb(0,255,0)" opacity="0.50"/>
<rect x="243.2" y="282" width="1" height="75" fill="rgb(60,255,0)" opacity="0.20"/>
<rect x="325.6" y="254" width="1" height="27" fill="rgb(0,240,120)" opacity="0.47"/>
<rect x="270.8" y="284" width="1" height="22" fill="rgb(60,255,0)" opacity="0.35"/>
<rect x="321.2" y="298" width="1" height="50" fill="rgb(0,240,120)" opacity="0.25"/>
<rect x="314.8" y="262" width="1" height="77" fill="rgb(0,255,0)" opacity="0.40"/>
<g fill="none" stroke-linecap="round">
<path d="M226 212 C236 230, 240 245, 241 280 C242 320, 248 350, 266 366 C282 374, 300 372, 312 360 C324 345, 330 320, 336 290 C340 260, 344 230, 348 212" stroke="rgb(60,255,0)" stroke-width="1.2" opacity="0.35"/>
<path d="M488 262 C492 245, 500 236, 508 228 C514 220, 515 210, 516 203" stroke="rgb(140,255,0)" stroke-width="2" opacity="0.85"/>
<path d="M536 203 C544 218, 552 232, 558 250" stroke="rgb(80,255,0)" stroke-width="1.6" opacity="0.7"/>
<path d="M550 222 C558 240, 562 262, 566 290 C570 320, 576 345, 592 362 C605 370, 630 366, 640 350 C650 330, 654 290, 660 250 C666 225, 674 212, 682 203" stroke="rgb(20,230,0)" stroke-width="1.5" opacity="0.45"/>
</g>
<rect x="314" y="203" width="1.2" height="2" fill="rgb(240,255,0)" opacity="0.7"/>
<rect x="314" y="206" width="1.2" height="2" fill="rgb(240,255,0)" opacity="0.7"/>
<rect x="314" y="209" width="1.2" height="2" fill="rgb(240,255,0)" opacity="0.7"/>
<rect x="314" y="212" width="1.2" height="2" fill="rgb(240,255,0)" opacity="0.7"/>
<rect x="314" y="215" width="1.2" height="2" fill="rgb(240,255,0)" opacity="0.7"/>
<rect x="314" y="218" width="1.2" height="2" fill="rgb(240,255,0)" opacity="0.7"/>
<rect x="314" y="221" width="1.2" height="2" fill="rgb(240,255,0)" opacity="0.7"/>
<rect x="314" y="224" width="1.2" height="2" fill="rgb(240,255,0)" opacity="0.7"/>
<rect x="314" y="227" width="1.2" height="2" fill="rgb(240,255,0)" opacity="0.7"/>
<rect x="314" y="230" width="1.2" height="2" fill="rgb(240,255,0)" opacity="0.7"/>
<rect x="314" y="233" width="1.2" height="2" fill="rgb(240,255,0)" opacity="0.7"/>
<rect x="314" y="236" width="1.2" height="2" fill="rgb(240,255,0)" opacity="0.7"/>
<rect x="314" y="239" width="1.2" height="2" fill="rgb(240,255,0)" opacity="0.7"/>
<rect x="314" y="242" width="1.2" height="2" fill="rgb(240,255,0)" opacity="0.7"/>
<rect x="314" y="245" width="1.2" height="2" fill="rgb(240,255,0)" opacity="0.7"/>
<rect x="314" y="248" width="1.2" height="2" fill="rgb(240,255,0)" opacity="0.7"/>
<rect x="314" y="251" width="1.2" height="2" fill="rgb(240,255,0)" opacity="0.7"/>
<rect x="314" y="254" width="1.2" height="2" fill="rgb(240,255,0)" opacity="0.7"/>
<rect x="314" y="257" width="1.2" height="2" fill="rgb(240,255,0)" opacity="0.7"/>
<rect x="314" y="260" width="1.2" height="2" fill="rgb(240,255,0)" opacity="0.7"/>
<rect x="314" y="263" width="1.2" height="2" fill="rgb(240,255,0)" opacity="0.7"/>
<rect x="314" y="266" width="1.2" height="2" fill="rgb(240,255,0)" opacity="0.7"/>
<rect x="314" y="269" width="1.2" height="2" fill="rgb(240,255,0)" opacity="0.7"/>
<rect x="314" y="272" width="1.2" height="2" fill="rgb(240,255,0)" opacity="0.7"/>
<rect x="314" y="275" width="1.2" height="2" fill="rgb(240,255,0)" opacity="0.7"/>
<rect x="314" y="278" width="1.2" height="2" fill="rgb(240,255,0)" opacity="0.7"/>
<rect x="314" y="281" width="1.2" height="2" fill="rgb(240,255,0)" opacity="0.7"/>
<rect x="314" y="284" width="1.2" height="2" fill="rgb(240,255,0)" opacity="0.7"/>
<rect x="314" y="287" width="1.2" height="2" fill="rgb(240,255,0)" opacity="0.7"/>
<rect x="314" y="290" width="1.2" height="2" fill="rgb(240,255,0)" opacity="0.7"/>
<rect x="314" y="293" width="1.2" height="2" fill="rgb(240,255,0)" opacity="0.7"/>
<rect x="314" y="296" width="1.2" height="2" fill="rgb(240,255,0)" opacity="0.7"/>
<rect x="314" y="299" width="1.2" height="2" fill="rgb(240,255,0)" opacity="0.7"/>
<rect x="314" y="302" width="1.2" height="2" fill="rgb(240,255,0)" opacity="0.7"/>
<rect x="314" y="305" width="1.2" height="2" fill="rgb(240,255,0)" opacity="0.7"/>
<rect x="314" y="308" width="1.2" height="2" fill="rgb(240,255,0)" opacity="0.7"/>
<rect x="314" y="311" width="1.2" height="2" fill="rgb(240,255,0)" opacity="0.7"/>
<rect x="314" y="314" width="1.2" height="2" fill="rgb(240,255,0)" opacity="0.7"/>
<rect x="314" y="317" width="1.2" height="2" fill="rgb(240,255,0)" opacity="0.7"/>
<rect x="314" y="320" width="1.2" height="2" fill="rgb(240,255,0)" opacity="0.7"/>
<rect x="314" y="323" width="1.2" height="2" fill="rgb(240,255,0)" opacity="0.7"/>
<rect x="314" y="326" width="1.2" height="2" fill="rgb(240,255,0)" opacity="0.7"/>
<rect x="314" y="329" width="1.2" height="2" fill="rgb(240,255,0)" opacity="0.7"/>
<rect x="314" y="332" width="1.2" height="2" fill="rgb(240,255,0)" opacity="0.7"/>
<rect x="314" y="335" width="1.2" height="2" fill="rgb(240,255,0)" opacity="0.7"/>
<rect x="314" y="338" width="1.2" height="2" fill="rgb(240,255,0)" opacity="0.7"/>
<rect x="314" y="341" width="1.2" height="2" fill="rgb(240,255,0)" opacity="0.7"/>
<rect x="314" y="344" width="1.2" height="2" fill="rgb(240,255,0)" opacity="0.7"/>
<rect x="314" y="347" width="1.2" height="2" fill="rgb(240,255,0)" opacity="0.7"/>
<rect x="314" y="350" width="1.2" height="2" fill="rgb(240,255,0)" opacity="0.7"/>
<rect x="314" y="353" width="1.2" height="2" fill="rgb(240,255,0)" opacity="0.7"/>
<rect x="314" y="356" width="1.2" height="2" fill="rgb(240,255,0)" opacity="0.7"/>
<rect x="314" y="359" width="1.2" height="2" fill="rgb(240,255,0)" opacity="0.7"/>
<rect x="314" y="362" width="1.2" height="2" fill="rgb(240,255,0)" opacity="0.7"/>
<rect x="314" y="365" width="1.2" height="2" fill="rgb(240,255,0)" opacity="0.7"/>
<rect x="314" y="368" width="1.2" height="2" fill="rgb(240,255,0)" opacity="0.7"/>
<rect x="314" y="371" width="1.2" height="2" fill="rgb(240,255,0)" opacity="0.7"/>
<rect x="314" y="374" width="1.2" height="2" fill="rgb(240,255,0)" opacity="0.7"/>
<rect x="257.5" y="315" width="1.8" height="60" fill="rgb(255,200,0)" opacity="0.8"/>
<rect x="529" y="330" width="1.5" height="45" fill="rgb(230,255,0)" opacity="0.6"/>
<rect x="370" y="330" width="14" height="3" fill="#ffdd00" opacity="0.8"/>
<rect x="370" y="336" width="13" height="3" fill="#ffee00" opacity="0.8"/>
<rect x="346" y="340" width="4" height="4" fill="#e8ff00" opacity="0.8"/>
<rect x="352" y="360" width="3" height="8" fill="#ddff00" opacity="0.8"/>
<rect x="512" y="331" width="5" height="5" fill="#ffcc00" opacity="0.8"/>
<rect x="533" y="343" width="18" height="3" fill="#ffee00" opacity="0.8"/>
<rect x="533" y="338" width="6" height="3" fill="#d0ff00" opacity="0.8"/>
<rect x="682" y="352" width="4" height="4" fill="#e0ff00" opacity="0.8"/>
<rect x="684" y="338" width="2" height="10" fill="#c0ff00" opacity="0.8"/>
<rect x="370" y="342" width="4" height="3" fill="#e8ff00" opacity="0.8"/>
<rect x="280.0" y="368.9" width="2.6" height="2.5" fill="#ffdd00" opacity="0.90"/>
<rect x="286.0" y="365.9" width="3.0" height="2.1" fill="#ffc000" opacity="0.91"/>
<rect x="250.8" y="341.1" width="2.2" height="2.8" fill="#ffc000" opacity="0.85"/>
<rect x="304.7" y="347.8" width="1.8" height="3.2" fill="#ffdd00" opacity="0.82"/>
<rect x="245.0" y="330.9" width="2.7" height="3.4" fill="#eeff00" opacity="0.87"/>
<rect x="276.2" y="366.2" width="2.1" height="2.4" fill="#ffc000" opacity="0.84"/>
<rect x="305.4" y="350.0" width="2.1" height="2.7" fill="#ffdd00" opacity="0.85"/>
<rect x="311.8" y="341.0" width="2.4" height="2.2" fill="#ffc000" opacity="0.78"/>
<rect x="313.5" y="337.6" width="2.3" height="2.1" fill="#eeff00" opacity="0.77"/>
<rect x="312.8" y="342.6" width="2.6" height="3.9" fill="#ffdd00" opacity="0.70"/>
<rect x="249.5" y="336.5" width="1.6" height="2.4" fill="#eeff00" opacity="0.72"/>
<rect x="315.0" y="336.9" width="2.1" height="3.2" fill="#ffee00" opacity="0.86"/>
<rect x="284.1" y="368.9" width="2.9" height="2.3" fill="#ffc000" opacity="0.93"/>
<rect x="253.4" y="344.4" width="2.1" height="2.4" fill="#ffdd00" opacity="0.77"/>
<rect x="266.1" y="362.7" width="2.2" height="2.9" fill="#ffdd00" opacity="0.90"/>
<rect x="252.9" y="343.6" width="2.5" height="2.7" fill="#eeff00" opacity="0.82"/>
<rect x="278.5" y="367.1" width="2.4" height="3.2" fill="#ffdd00" opacity="0.69"/>
<rect x="261.3" y="360.9" width="2.0" height="3.4" fill="#ffee00" opacity="0.61"/>
<rect x="259.7" y="354.7" width="2.8" height="2.6" fill="#ffee00" opacity="0.71"/>
<rect x="287.1" y="365.7" width="2.3" height="2.2" fill="#ffdd00" opacity="0.71"/>
<rect x="268.3" y="361.8" width="2.6" height="2.5" fill="#ffc000" opacity="0.83"/>
<rect x="249.0" y="338.8" width="2.6" height="2.7" fill="#ffc000" opacity="0.78"/>
<rect x="260.8" y="358.7" width="2.4" height="2.2" fill="#ffee00" opacity="0.86"/>
<rect x="272.7" y="366.3" width="2.6" height="3.2" fill="#ffee00" opacity="0.92"/>
<rect x="254.5" y="346.5" width="2.9" height="3.6" fill="#ffdd00" opacity="0.87"/>
<rect x="257.3" y="348.9" width="2.2" height="2.9" fill="#eeff00" opacity="0.70"/>
<rect x="295.8" y="364.3" width="1.8" height="3.4" fill="#eeff00" opacity="0.83"/>
<rect x="254.1" y="347.7" width="2.1" height="2.2" fill="#eeff00" opacity="0.85"/>
<rect x="281.9" y="366.7" width="2.1" height="2.7" fill="#ffee00" opacity="0.92"/>
<rect x="256.8" y="352.3" width="1.9" height="3.4" fill="#eeff00" opacity="0.63"/>
<rect x="243.8" y="328.1" width="1.9" height="3.5" fill="#ffdd00" opacity="0.82"/>
<rect x="263.7" y="362.4" width="1.5" height="3.3" fill="#ffdd00" opacity="0.87"/>
<rect x="289.6" y="365.9" width="2.1" height="2.5" fill="#ffc000" opacity="0.91"/>
<rect x="265.1" y="359.7" width="1.7" height="2.9" fill="#eeff00" opacity="0.77"/>
<rect x="271.7" y="365.4" width="1.9" height="2.5" fill="#ffdd00" opacity="0.68"/>
<rect x="242.8" y="324.8" width="1.9" height="2.9" fill="#ffee00" opacity="0.82"/>
<rect x="283.1" y="369.3" width="2.0" height="2.6" fill="#ffee00" opacity="0.71"/>
<rect x="298.0" y="362.5" width="2.9" height="3.6" fill="#ffdd00" opacity="0.72"/>
<rect x="296.7" y="363.7" width="2.1" height="2.7" fill="#ffc000" opacity="0.68"/>
<rect x="255.3" y="348.1" width="2.3" height="2.2" fill="#ffee00" opacity="0.95"/>
<rect x="304.8" y="352.0" width="2.8" height="2.9" fill="#ffc000" opacity="0.61"/>
<rect x="288.4" y="366.2" width="2.0" height="2.7" fill="#ffc000" opacity="0.69"/>
<rect x="289.6" y="366.5" width="1.8" height="3.6" fill="#ffdd00" opacity="0.89"/>
<rect x="304.5" y="351.3" width="2.6" height="3.2" fill="#eeff00" opacity="0.88"/>
<rect x="248.3" y="337.9" width="1.8" height="2.3" fill="#ffee00" opacity="0.77"/>
<rect x="297.0" y="365.2" width="1.9" height="2.5" fill="#eeff00" opacity="0.82"/>
<rect x="266.7" y="363.2" width="1.6" height="3.3" fill="#ffee00" opacity="0.90"/>
<rect x="252.2" y="344.0" width="2.7" height="2.7" fill="#ffee00" opacity="0.89"/>
<rect x="305.0" y="347.8" width="2.2" height="3.6" fill="#eeff00" opacity="0.68"/>
<rect x="297.5" y="360.3" width="2.4" height="3.3" fill="#ffdd00" opacity="0.79"/>
<rect x="301.5" y="353.2" width="1.7" height="3.8" fill="#eeff00" opacity="0.91"/>
<rect x="268.0" y="364.5" width="1.9" height="3.1" fill="#eeff00" opacity="0.82"/>
<rect x="256.5" y="351.4" width="2.0" height="2.5" fill="#ffee00" opacity="0.65"/>
<rect x="243.7" y="326.2" width="1.5" height="2.6" fill="#ffdd00" opacity="0.95"/>
<rect x="254.2" y="344.6" width="2.1" height="3.5" fill="#ffc000" opacity="0.80"/>
<rect x="254.2" y="346.8" width="1.9" height="2.3" fill="#eeff00" opacity="0.90"/>
<rect x="315.4" y="338.2" width="2.6" height="2.3" fill="#ffee00" opacity="0.93"/>
<rect x="280.4" y="367.3" width="1.5" height="3.0" fill="#ffee00" opacity="0.78"/>
<rect x="242.2" y="327.4" width="1.5" height="3.0" fill="#ffdd00" opacity="0.88"/>
<rect x="298.3" y="361.0" width="2.7" height="3.4" fill="#ffee00" opacity="0.93"/>
<rect x="275.1" y="365.2" width="2.8" height="3.2" fill="#ffee00" opacity="0.80"/>
<rect x="254.2" y="346.6" width="2.5" height="3.5" fill="#eeff00" opacity="0.82"/>
<rect x="270.2" y="362.8" width="2.5" height="3.1" fill="#eeff00" opacity="0.72"/>
<rect x="298.1" y="360.3" width="2.3" height="3.3" fill="#ffdd00" opacity="0.72"/>
<rect x="250.0" y="339.3" width="1.5" height="2.7" fill="#ffee00" opacity="0.74"/>
<rect x="260.1" y="357.2" width="1.8" height="3.7" fill="#eeff00" opacity="0.62"/>
<rect x="285.4" y="366.6" width="2.2" height="3.8" fill="#ffc000" opacity="0.74"/>
<rect x="295.9" y="362.1" width="2.5" height="3.8" fill="#eeff00" opacity="0.91"/>
<rect x="301.3" y="354.8" width="2.6" height="3.2" fill="#ffee00" opacity="0.67"/>
<rect x="289.2" y="367.5" width="2.4" height="2.9" fill="#ffee00" opacity="0.64"/>
<rect x="291.2" y="353.6" width="2.2" height="3.6" fill="#ff8800" opacity="0.68"/>
<rect x="285.3" y="354.9" width="1.5" height="3.2" fill="#ffcc00" opacity="0.70"/>
<rect x="262.4" y="351.9" width="2.3" height="2.6" fill="#ffcc00" opacity="0.86"/>
<rect x="274.7" y="356.5" width="2.1" height="3.6" fill="#ffaa00" opacity="0.86"/>
<rect x="295.1" y="350.6" width="2.9" height="3.5" fill="#ffaa00" opacity="0.89"/>
<rect x="292.6" y="354.4" width="1.6" height="3.6" fill="#ff8800" opacity="0.72"/>
<rect x="281.4" y="354.5" width="1.5" height="2.8" fill="#ffcc00" opacity="0.70"/>
<rect x="285.5" y="354.7" width="2.7" height="2.9" fill="#ffaa00" opacity="0.63"/>
<rect x="279.7" y="356.6" width="3.0" height="2.1" fill="#ffaa00" opacity="0.88"/>
<rect x="268.3" y="355.0" width="2.9" height="2.4" fill="#ffcc00" opacity="0.64"/>
<rect x="268.6" y="354.8" width="2.4" height="3.7" fill="#ffaa00" opacity="0.63"/>
<rect x="287.1" y="354.0" width="2.9" height="3.8" fill="#ff8800" opacity="0.83"/>
<rect x="277.0" y="355.4" width="2.0" height="3.2" fill="#ffcc00" opacity="0.83"/>
<rect x="269.1" y="354.8" width="1.8" height="3.1" fill="#ffaa00" opacity="0.65"/>
<rect x="267.8" y="353.4" width="2.0" height="2.3" fill="#ffaa00" opacity="0.84"/>
<rect x="289.9" y="353.3" width="2.1" height="2.2" fill="#ff8800" opacity="0.69"/>
<rect x="276.7" y="354.9" width="1.7" height="2.2" fill="#ffaa00" opacity="0.72"/>
<rect x="288.3" y="354.4" width="1.9" height="3.7" fill="#ffcc00" opacity="0.93"/>
<rect x="315.4" y="369.0" width="2.2" height="2.3" fill="#ffc000" opacity="0.81"/>
<rect x="322.2" y="345.5" width="1.9" height="2.8" fill="#eeff00" opacity="0.70"/>
<rect x="328.8" y="329.2" width="2.1" height="2.2" fill="#eeff00" opacity="0.74"/>
<rect x="318.6" y="357.4" width="2.7" height="2.2" fill="#ffee00" opacity="0.76"/>
<rect x="318.5" y="360.1" width="1.5" height="3.1" fill="#eeff00" opacity="0.95"/>
<rect x="331.8" y="322.2" width="1.7" height="2.1" fill="#ffdd00" opacity="0.76"/>
<rect x="320.6" y="354.4" width="3.0" height="3.9" fill="#ffc000" opacity="0.75"/>
<rect x="318.4" y="359.0" width="1.6" height="3.9" fill="#ffc000" opacity="0.88"/>
<rect x="333.6" y="314.6" width="2.2" height="3.6" fill="#ffc000" opacity="0.63"/>
<rect x="329.6" y="324.2" width="2.5" height="3.5" fill="#eeff00" opacity="0.83"/>
<rect x="334.3" y="312.7" width="2.1" height="2.3" fill="#eeff00" opacity="0.90"/>
<rect x="334.6" y="312.6" width="2.0" height="3.0" fill="#ffee00" opacity="0.87"/>
<rect x="316.4" y="368.6" width="1.6" height="2.4" fill="#ffee00" opacity="0.78"/>
<rect x="319.8" y="354.2" width="2.4" height="2.9" fill="#ffdd00" opacity="0.81"/>
<rect x="316.3" y="362.9" width="2.8" height="3.5" fill="#ffdd00" opacity="0.65"/>
<rect x="324.9" y="338.4" width="2.9" height="3.3" fill="#ffee00" opacity="0.74"/>
<rect x="312.9" y="374.5" width="2.6" height="3.3" fill="#ffdd00" opacity="0.70"/>
<rect x="326.6" y="334.6" width="2.9" height="3.0" fill="#ffee00" opacity="0.74"/>
<rect x="319.3" y="355.3" width="2.5" height="2.8" fill="#ffc000" opacity="0.67"/>
<rect x="335.0" y="309.7" width="3.0" height="3.8" fill="#ffee00" opacity="0.74"/>
<rect x="320.3" y="354.8" width="2.1" height="2.8" fill="#ffc000" opacity="0.73"/>
<rect x="327.1" y="331.9" width="2.0" height="3.0" fill="#ffdd00" opacity="0.78"/>
<rect x="325.0" y="338.7" width="1.6" height="2.7" fill="#eeff00" opacity="0.73"/>
<rect x="334.0" y="313.2" width="2.6" height="2.7" fill="#ffee00" opacity="0.60"/>
<rect x="327.1" y="336.0" width="2.4" height="2.7" fill="#eeff00" opacity="0.67"/>
<rect x="329.0" y="324.7" width="1.7" height="3.4" fill="#eeff00" opacity="0.62"/>
<rect x="314.9" y="368.1" width="2.7" height="2.8" fill="#eeff00" opacity="0.74"/>
<rect x="319.9" y="355.3" width="3.0" height="3.6" fill="#eeff00" opacity="0.61"/>
<rect x="315.9" y="364.5" width="1.9" height="3.9" fill="#ffc000" opacity="0.62"/>
<rect x="327.0" y="335.1" width="2.5" height="2.0" fill="#ffdd00" opacity="0.80"/>
<rect x="322.6" y="374.2" width="2.5" height="3.9" fill="#ffee00" opacity="0.66"/>
<rect x="323.5" y="370.6" width="2.6" height="3.3" fill="#ffee00" opacity="0.76"/>
<rect x="335.0" y="339.7" width="2.9" height="2.6" fill="#ffee00" opacity="0.85"/>
<rect x="327.9" y="359.2" width="1.7" height="3.6" fill="#ffee00" opacity="0.75"/>
<rect x="330.2" y="352.6" width="2.8" height="2.9" fill="#ffee00" opacity="0.91"/>
<rect x="334.4" y="338.2" width="2.2" height="2.8" fill="#ffc000" opacity="0.78"/>
<rect x="328.8" y="356.2" width="2.7" height="2.6" fill="#ffee00" opacity="0.72"/>
<rect x="324.0" y="368.3" width="2.3" height="2.7" fill="#ffc000" opacity="0.73"/>
<rect x="330.1" y="352.4" width="2.0" height="3.3" fill="#ffdd00" opacity="0.82"/>
<rect x="326.7" y="359.8" width="2.9" height="3.5" fill="#eeff00" opacity="0.73"/>
<rect x="331.9" y="346.5" width="2.3" height="3.9" fill="#ffc000" opacity="0.74"/>
<rect x="323.0" y="370.2" width="2.5" height="2.9" fill="#ffdd00" opacity="0.61"/>
<rect x="331.9" y="347.0" width="2.0" height="2.2" fill="#eeff00" opacity="0.88"/>
<rect x="323.9" y="370.2" width="1.8" height="3.0" fill="#eeff00" opacity="0.64"/>
<rect x="332.9" y="345.1" width="2.9" height="3.3" fill="#eeff00" opacity="0.64"/>
<rect x="333.6" y="343.6" width="2.7" height="3.9" fill="#ffee00" opacity="0.69"/>
<rect x="322.4" y="373.3" width="1.9" height="2.4" fill="#ffdd00" opacity="0.69"/>
<rect x="322.1" y="372.2" width="2.9" height="2.2" fill="#ffc000" opacity="0.66"/>
<rect x="334.7" y="340.8" width="2.3" height="3.4" fill="#eeff00" opacity="0.71"/>
<rect x="328.5" y="358.0" width="2.3" height="2.9" fill="#eeff00" opacity="0.72"/>
<rect x="225.6" y="218.7" width="2.6" height="3.7" fill="#b0ff00" opacity="0.93"/>
<rect x="225.3" y="217.5" width="1.6" height="3.7" fill="#b0ff00" opacity="0.93"/>
<rect x="234.2" y="238.5" width="2.0" height="2.2" fill="#b0ff00" opacity="0.65"/>
<rect x="226.4" y="226.4" width="3.0" height="3.9" fill="#b0ff00" opacity="0.75"/>
<rect x="229.9" y="232.4" width="2.4" height="3.8" fill="#b0ff00" opacity="0.75"/>
<rect x="227.1" y="226.6" width="2.3" height="3.8" fill="#b0ff00" opacity="0.65"/>
<rect x="225.5" y="222.6" width="2.9" height="3.9" fill="#b0ff00" opacity="0.90"/>
<rect x="233.2" y="238.3" width="2.4" height="3.3" fill="#d0ff00" opacity="0.93"/>
<rect x="223.3" y="218.1" width="1.5" height="2.2" fill="#d0ff00" opacity="0.94"/>
<rect x="220.5" y="215.9" width="2.5" height="3.0" fill="#b0ff00" opacity="0.60"/>
<rect x="224.1" y="217.7" width="2.8" height="2.7" fill="#d0ff00" opacity="0.68"/>
<rect x="229.1" y="223.2" width="1.6" height="2.7" fill="#d0ff00" opacity="0.78"/>
<rect x="227.5" y="224.9" width="2.1" height="2.3" fill="#b0ff00" opacity="0.69"/>
<rect x="229.8" y="225.8" width="1.9" height="3.2" fill="#d0ff00" opacity="0.81"/>
<rect x="230.3" y="227.0" width="2.0" height="2.1" fill="#d0ff00" opacity="0.86"/>
<rect x="223.0" y="218.3" width="1.6" height="3.3" fill="#b0ff00" opacity="0.75"/>
<rect x="222.9" y="213.7" width="2.5" height="2.1" fill="#b0ff00" opacity="0.95"/>
<rect x="226.0" y="225.2" width="2.7" height="2.6" fill="#b0ff00" opacity="0.73"/>
<rect x="233.0" y="223.6" width="2.2" height="3.5" fill="#b0ff00" opacity="0.62"/>
<rect x="230.3" y="214.7" width="1.7" height="2.1" fill="#b0ff00" opacity="0.91"/>
<rect x="245.1" y="242.2" width="2.9" height="2.2" fill="#d0ff00" opacity="0.93"/>
<rect x="229.6" y="220.5" width="2.8" height="3.4" fill="#d0ff00" opacity="0.73"/>
<rect x="241.3" y="234.4" width="2.8" height="3.9" fill="#d0ff00" opacity="0.84"/>
<rect x="229.3" y="218.0" width="1.9" height="3.0" fill="#d0ff00" opacity="0.87"/>
<rect x="238.2" y="228.1" width="1.8" height="2.1" fill="#d0ff00" opacity="0.94"/>
<rect x="243.7" y="240.8" width="2.9" height="3.2" fill="#b0ff00" opacity="0.70"/>
<rect x="242.6" y="237.6" width="2.4" height="3.6" fill="#d0ff00" opacity="0.61"/>
<rect x="230.2" y="219.1" width="2.2" height="3.1" fill="#b0ff00" opacity="0.70"/>
<rect x="338.4" y="239.0" width="2.9" height="2.0" fill="#e0ff00" opacity="0.88"/>
<rect x="345.3" y="220.4" width="1.8" height="2.0" fill="#e0ff00" opacity="0.94"/>
<rect x="343.2" y="226.9" width="2.5" height="2.4" fill="#e0ff00" opacity="0.66"/>
<rect x="340.1" y="234.6" width="2.1" height="3.1" fill="#e0ff00" opacity="0.72"/>
<rect x="353.4" y="207.0" width="2.8" height="3.7" fill="#b0ff00" opacity="0.76"/>
<rect x="347.2" y="219.0" width="2.9" height="2.6" fill="#e0ff00" opacity="0.66"/>
<rect x="354.3" y="203.8" width="2.5" height="2.6" fill="#b0ff00" opacity="0.77"/>
<rect x="354.3" y="205.4" width="1.5" height="2.9" fill="#e0ff00" opacity="0.77"/>
<rect x="352.6" y="207.2" width="2.0" height="3.2" fill="#b0ff00" opacity="0.82"/>
<rect x="354.8" y="203.9" width="1.6" height="3.5" fill="#b0ff00" opacity="0.80"/>
<rect x="342.1" y="223.6" width="2.4" height="2.1" fill="#e0ff00" opacity="0.79"/>
<rect x="354.7" y="204.8" width="1.9" height="3.6" fill="#e0ff00" opacity="0.92"/>
<rect x="348.5" y="215.2" width="1.9" height="3.3" fill="#b0ff00" opacity="0.84"/>
<rect x="351.9" y="210.7" width="2.7" height="2.3" fill="#e0ff00" opacity="0.71"/>
<rect x="342.2" y="229.3" width="2.3" height="2.6" fill="#e0ff00" opacity="0.93"/>
<rect x="346.9" y="215.8" width="1.7" height="3.9" fill="#e0ff00" opacity="0.71"/>
<rect x="340.9" y="233.3" width="3.0" height="3.2" fill="#b0ff00" opacity="0.86"/>
<rect x="348.4" y="214.3" width="2.1" height="3.4" fill="#b0ff00" opacity="0.80"/>
<rect x="355.0" y="204.9" width="2.1" height="2.6" fill="#b0ff00" opacity="0.91"/>
<rect x="346.0" y="219.9" width="2.4" height="2.2" fill="#b0ff00" opacity="0.78"/>
<rect x="381.0" y="213.1" width="2.5" height="3.3" fill="#b0ff00" opacity="0.72"/>
<rect x="394.0" y="238.3" width="2.9" height="3.2" fill="#e0ff00" opacity="0.87"/>
<rect x="381.5" y="214.6" width="2.2" height="2.0" fill="#b0ff00" opacity="0.77"/>
<rect x="390.0" y="230.1" width="2.4" height="2.4" fill="#e0ff00" opacity="0.74"/>
<rect x="383.3" y="214.2" width="2.8" height="3.6" fill="#e0ff00" opacity="0.68"/>
<rect x="393.6" y="239.5" width="1.6" height="2.8" fill="#e0ff00" opacity="0.84"/>
<rect x="391.0" y="231.9" width="2.9" height="3.7" fill="#e0ff00" opacity="0.81"/>
<rect x="383.3" y="216.6" width="1.8" height="3.9" fill="#b0ff00" opacity="0.66"/>
<rect x="394.3" y="240.8" width="2.9" height="2.5" fill="#b0ff00" opacity="0.85"/>
<rect x="385.4" y="218.0" width="2.2" height="3.8" fill="#b0ff00" opacity="0.79"/>
<rect x="372.0" y="203.3" width="2.8" height="3.9" fill="#e0ff00" opacity="0.80"/>
<rect x="390.4" y="231.2" width="2.5" height="3.2" fill="#b0ff00" opacity="0.63"/>
<rect x="387.7" y="223.1" width="2.1" height="2.7" fill="#e0ff00" opacity="0.86"/>
<rect x="388.3" y="224.7" width="2.6" height="3.9" fill="#e0ff00" opacity="0.92"/>
<rect x="388.8" y="225.0" width="2.8" height="3.4" fill="#e0ff00" opacity="0.86"/>
<rect x="391.5" y="235.2" width="1.6" height="2.5" fill="#b0ff00" opacity="0.73"/>
<rect x="384.8" y="217.8" width="2.4" height="2.8" fill="#e0ff00" opacity="0.82"/>
<rect x="375.3" y="206.3" width="2.3" height="3.2" fill="#e0ff00" opacity="0.91"/>
<rect x="373.6" y="204.9" width="2.4" height="3.1" fill="#e0ff00" opacity="0.75"/>
<rect x="388.8" y="227.5" width="2.3" height="3.9" fill="#e0ff00" opacity="0.80"/>
<rect x="555.5" y="234.9" width="2.1" height="2.1" fill="#ffee00" opacity="0.68"/>
<rect x="556.0" y="234.8" width="2.9" height="2.1" fill="#e0ff00" opacity="0.89"/>
<rect x="562.0" y="250.7" width="2.6" height="3.4" fill="#ffee00" opacity="0.80"/>
<rect x="552.8" y="230.7" width="2.3" height="3.9" fill="#e0ff00" opacity="0.86"/>
<rect x="558.7" y="241.9" width="1.5" height="3.4" fill="#ffee00" opacity="0.78"/>
<rect x="555.6" y="239.1" width="2.8" height="3.2" fill="#ffee00" opacity="0.92"/>
<rect x="564.9" y="253.9" width="1.6" height="2.9" fill="#ffee00" opacity="0.80"/>
<rect x="563.9" y="255.0" width="1.6" height="2.5" fill="#e0ff00" opacity="0.84"/>
<rect x="561.8" y="249.6" width="2.0" height="3.0" fill="#e0ff00" opacity="0.79"/>
<rect x="554.5" y="236.2" width="2.4" height="3.6" fill="#e0ff00" opacity="0.67"/>
<rect x="549.4" y="223.2" width="1.5" height="2.3" fill="#e0ff00" opacity="0.77"/>
<rect x="558.7" y="246.4" width="2.8" height="2.4" fill="#ffee00" opacity="0.84"/>
<rect x="554.6" y="232.8" width="2.2" height="2.6" fill="#ffee00" opacity="0.92"/>
<rect x="560.9" y="248.8" width="2.0" height="3.0" fill="#ffee00" opacity="0.65"/>
<rect x="564.0" y="254.6" width="2.1" height="3.6" fill="#e0ff00" opacity="0.77"/>
<rect x="557.9" y="243.2" width="2.0" height="3.6" fill="#ffee00" opacity="0.73"/>
<rect x="552.4" y="228.7" width="2.5" height="2.1" fill="#e0ff00" opacity="0.63"/>
<rect x="548.4" y="224.7" width="2.4" height="3.6" fill="#e0ff00" opacity="0.88"/>
<rect x="556.1" y="236.5" width="2.3" height="2.0" fill="#e0ff00" opacity="0.84"/>
<rect x="553.4" y="232.5" width="2.3" height="2.6" fill="#ffee00" opacity="0.60"/>
<rect x="656.8" y="250.4" width="2.0" height="2.8" fill="#e0ff00" opacity="0.69"/>
<rect x="671.8" y="225.5" width="2.3" height="2.6" fill="#ffee00" opacity="0.84"/>
<rect x="663.9" y="237.5" width="2.3" height="2.9" fill="#e0ff00" opacity="0.70"/>
<rect x="667.5" y="231.7" width="1.6" height="2.8" fill="#e0ff00" opacity="0.73"/>
<rect x="657.4" y="251.4" width="2.1" height="3.8" fill="#e0ff00" opacity="0.74"/>
<rect x="664.2" y="240.7" width="2.9" height="3.6" fill="#e0ff00" opacity="0.64"/>
<rect x="663.2" y="238.7" width="2.3" height="2.0" fill="#ffee00" opacity="0.78"/>
<rect x="655.1" y="254.9" width="1.5" height="2.2" fill="#ffee00" opacity="0.85"/>
<rect x="659.9" y="247.1" width="2.8" height="3.1" fill="#e0ff00" opacity="0.80"/>
<rect x="669.8" y="228.4" width="2.5" height="2.4" fill="#ffee00" opacity="0.83"/>
<rect x="660.2" y="248.9" width="2.4" height="2.0" fill="#e0ff00" opacity="0.81"/>
<rect x="668.2" y="228.9" width="2.8" height="3.0" fill="#e0ff00" opacity="0.69"/>
<rect x="659.5" y="248.6" width="1.6" height="2.0" fill="#e0ff00" opacity="0.88"/>
<rect x="662.5" y="243.1" width="2.5" height="3.9" fill="#ffee00" opacity="0.92"/>
<rect x="659.7" y="244.7" width="1.5" height="3.3" fill="#ffee00" opacity="0.73"/>
<rect x="658.3" y="248.8" width="1.8" height="2.9" fill="#e0ff00" opacity="0.68"/>
<rect x="669.0" y="231.2" width="1.6" height="2.3" fill="#e0ff00" opacity="0.73"/>
<rect x="657.4" y="251.0" width="2.5" height="3.2" fill="#ffee00" opacity="0.93"/>
<rect x="666.1" y="231.9" width="2.4" height="2.2" fill="#ffee00" opacity="0.62"/>
<rect x="673.7" y="222.6" width="2.0" height="2.2" fill="#e0ff00" opacity="0.67"/>
<rect x="494.0" y="236.7" width="2.4" height="2.8" fill="#ffee00" opacity="0.85"/>
<rect x="496.2" y="233.7" width="1.8" height="2.9" fill="#ffee00" opacity="0.82"/>
<rect x="507.0" y="237.1" width="1.6" height="3.6" fill="#d0ff00" opacity="0.70"/>
<rect x="505.4" y="234.7" width="2.5" height="2.2" fill="#d0ff00" opacity="0.65"/>
<rect x="501.3" y="237.5" width="2.4" height="2.4" fill="#d0ff00" opacity="0.67"/>
<rect x="493.4" y="236.7" width="1.8" height="2.3" fill="#ffee00" opacity="0.74"/>
<rect x="500.7" y="234.0" width="1.5" height="2.5" fill="#d0ff00" opacity="0.67"/>
<rect x="496.3" y="237.9" width="2.4" height="2.7" fill="#ffee00" opacity="0.93"/>
<rect x="494.7" y="237.0" width="2.1" height="3.3" fill="#d0ff00" opacity="0.69"/>
<rect x="496.8" y="238.5" width="1.6" height="3.4" fill="#d0ff00" opacity="0.82"/>
<rect x="506.9" y="234.8" width="2.3" height="2.2" fill="#ffee00" opacity="0.90"/>
<rect x="499.7" y="238.3" width="2.8" height="3.1" fill="#ffee00" opacity="0.95"/>
<rect x="508.0" y="238.3" width="1.7" height="2.7" fill="#d0ff00" opacity="0.65"/>
<rect x="504.1" y="236.6" width="1.9" height="2.6" fill="#ffee00" opacity="0.67"/>
<rect x="224.0" y="349.4" width="1.9" height="2.7" fill="#e0ff00" opacity="0.79"/>
<rect x="222.2" y="340.8" width="2.6" height="2.2" fill="#e0ff00" opacity="0.82"/>
<rect x="223.2" y="355.7" width="1.5" height="2.8" fill="#e0ff00" opacity="0.88"/>
<rect x="222.2" y="337.0" width="2.5" height="2.5" fill="#e0ff00" opacity="0.68"/>
<rect x="224.3" y="359.1" width="2.4" height="3.7" fill="#e0ff00" opacity="0.64"/>
<rect x="223.8" y="353.7" width="2.8" height="3.0" fill="#e0ff00" opacity="0.80"/>
<rect x="224.8" y="355.7" width="1.6" height="2.0" fill="#e0ff00" opacity="0.84"/>
<rect x="221.8" y="340.1" width="2.8" height="3.8" fill="#e0ff00" opacity="0.82"/>
<rect x="679.1" y="319.5" width="1.7" height="2.1" fill="#e8ff00" opacity="0.64"/>
<rect x="684.9" y="350.8" width="1.7" height="3.3" fill="#e8ff00" opacity="0.91"/>
<rect x="683.7" y="350.3" width="2.5" height="3.9" fill="#e8ff00" opacity="0.76"/>
<rect x="681.4" y="333.7" width="2.2" height="3.6" fill="#e8ff00" opacity="0.81"/>
<rect x="683.1" y="344.7" width="1.7" height="3.1" fill="#d0ff00" opacity="0.95"/>
<rect x="683.9" y="361.0" width="2.3" height="3.5" fill="#e8ff00" opacity="0.94"/>
<rect x="685.8" y="356.4" width="2.8" height="2.1" fill="#d0ff00" opacity="0.62"/>
<rect x="680.7" y="341.5" width="1.7" height="2.2" fill="#e8ff00" opacity="0.63"/>
<rect x="680.0" y="332.6" width="2.0" height="2.7" fill="#d0ff00" opacity="0.85"/>
<rect x="678.7" y="318.7" width="1.7" height="2.2" fill="#d0ff00" opacity="0.80"/>
<rect x="680.3" y="326.8" width="3.0" height="2.5" fill="#d0ff00" opacity="0.72"/>
<rect x="682.0" y="325.9" width="1.6" height="3.2" fill="#e8ff00" opacity="0.74"/>
<rect x="309" y="343" width="5" height="6" fill="#ffdd00" opacity="0.85"/><rect x="313" y="336" width="3" height="4" fill="#ff5500" opacity="0.85"/>
<rect x="396" y="203" width="53" height="172" fill="url(#bandG)"/>
<rect x="444.8" y="203" width="1.0" height="172" fill="#ffea00" opacity="0.6"/>
<rect x="444.3" y="203" width="2.0" height="172" fill="#ffea00" opacity="0.6"/>
<rect x="422.2" y="203" width="2.0" height="172" fill="#ffb400" opacity="0.6"/>
<rect x="407.0" y="203" width="1.0" height="172" fill="#ffa000" opacity="0.6"/>
<rect x="418.2" y="203" width="2.0" height="172" fill="#ffea00" opacity="0.6"/>
<rect x="428.8" y="203" width="1.0" height="172" fill="#ffb400" opacity="0.6"/>
<rect x="434.4" y="203" width="1.0" height="172" fill="#ffff00" opacity="0.6"/>
<rect x="403.4" y="203" width="1.5" height="172" fill="#ffff30" opacity="0.6"/>
<rect x="409.2" y="203" width="1.5" height="172" fill="#ffff30" opacity="0.6"/>
<rect x="442.4" y="203" width="1.5" height="172" fill="#ffff30" opacity="0.6"/>
<rect x="436.2" y="203" width="2.0" height="172" fill="#ffb400" opacity="0.6"/>
<rect x="442.0" y="203" width="1.0" height="172" fill="#ffa000" opacity="0.6"/>
<rect x="420.6" y="203" width="1.0" height="172" fill="#ffff00" opacity="0.6"/>
<rect x="408.2" y="203" width="2.0" height="172" fill="#ffea00" opacity="0.6"/>
<rect x="422.3" y="203" width="2.0" height="172" fill="#ffa000" opacity="0.6"/>
<rect x="415.3" y="203" width="1.0" height="172" fill="#ffb400" opacity="0.6"/>
<rect x="405.3" y="203" width="1.0" height="172" fill="#ffff30" opacity="0.6"/>
<rect x="402.8" y="203" width="2.0" height="172" fill="#ffa000" opacity="0.6"/>
<rect x="417.6" y="203" width="1.5" height="172" fill="#ffa000" opacity="0.6"/>
<rect x="444.3" y="203" width="1.0" height="172" fill="#ffb400" opacity="0.6"/>
<rect x="430.3" y="203" width="2.0" height="172" fill="#ffb400" opacity="0.6"/>
<rect x="414.7" y="203" width="1.0" height="172" fill="#ffb400" opacity="0.6"/>
<rect x="440.7" y="203" width="1.0" height="172" fill="#ffc800" opacity="0.6"/>
<rect x="409.3" y="203" width="1.0" height="172" fill="#ffb400" opacity="0.6"/>
<rect x="447.4" y="203" width="1.5" height="172" fill="#ffea00" opacity="0.6"/>
<rect x="427.4" y="203" width="1.0" height="172" fill="#ffa000" opacity="0.6"/>
<rect x="433.1" y="203" width="1.0" height="172" fill="#ffa000" opacity="0.6"/>
<rect x="424.3" y="203" width="1.0" height="172" fill="#ffc800" opacity="0.6"/>
<rect x="401.0" y="203" width="1.5" height="172" fill="#ffff00" opacity="0.6"/>
<rect x="433.1" y="203" width="1.5" height="172" fill="#ffea00" opacity="0.6"/>
<rect x="445.4" y="203" width="1.5" height="172" fill="#ffb400" opacity="0.6"/>
<rect x="434.6" y="203" width="1.0" height="172" fill="#ffff00" opacity="0.6"/>
<rect x="429.9" y="203" width="2.0" height="172" fill="#ffb400" opacity="0.6"/>
<rect x="406.2" y="203" width="2.0" height="172" fill="#ffff00" opacity="0.6"/>
<rect x="400.1" y="203" width="1.0" height="172" fill="#ffa000" opacity="0.6"/>
<rect x="408.8" y="203" width="2.0" height="172" fill="#ffc800" opacity="0.6"/>
<rect x="412.9" y="203" width="2.0" height="172" fill="#ffff00" opacity="0.6"/>
<rect x="419.2" y="203" width="1.0" height="172" fill="#ffb400" opacity="0.6"/>
<rect x="415.1" y="203" width="1.0" height="172" fill="#ffa000" opacity="0.6"/>
<rect x="402.7" y="203" width="1.0" height="172" fill="#ffa000" opacity="0.6"/>
<rect x="449" y="203" width="37" height="172" fill="rgb(20,248,100)"/>
<rect x="452" y="260" width="32" height="115" fill="rgb(20,255,40)" filter="url(#bl4)" opacity="0.8"/>
<rect x="452.8" y="203.0" width="1.8" height="2" fill="#ffee00" opacity="0.8"/>
<rect x="452.8" y="207.5" width="1.8" height="3" fill="#ffee00" opacity="0.8"/>
<rect x="452.8" y="212.0" width="1.8" height="3" fill="#ffee00" opacity="0.8"/>
<rect x="452.8" y="216.5" width="1.8" height="2" fill="#ffee00" opacity="0.8"/>
<rect x="452.8" y="220.5" width="1.8" height="3" fill="#ffee00" opacity="0.8"/>
<rect x="452.8" y="225.0" width="1.8" height="2.5" fill="#ffee00" opacity="0.8"/>
<rect x="452.8" y="229.5" width="1.8" height="3" fill="#ffee00" opacity="0.8"/>
<rect x="452.8" y="234.5" width="1.8" height="2.5" fill="#ffee00" opacity="0.8"/>
<rect x="452.8" y="238.5" width="1.8" height="2.5" fill="#ffee00" opacity="0.8"/>
<rect x="452.8" y="243.5" width="1.8" height="2" fill="#ffee00" opacity="0.8"/>
<rect x="452.8" y="247.5" width="1.8" height="2" fill="#ffee00" opacity="0.8"/>
<rect x="452.8" y="251.5" width="1.8" height="3" fill="#ffee00" opacity="0.8"/>
<rect x="452.8" y="256.0" width="1.8" height="2" fill="#ffee00" opacity="0.8"/>
<rect x="452.8" y="260.5" width="1.8" height="3" fill="#ffee00" opacity="0.8"/>
<rect x="452.8" y="265.5" width="1.8" height="3" fill="#ffee00" opacity="0.8"/>
<rect x="452.8" y="271.0" width="1.8" height="3" fill="#ffee00" opacity="0.8"/>
<rect x="452.8" y="276.5" width="1.8" height="3" fill="#ffee00" opacity="0.8"/>
<rect x="452.8" y="282.0" width="1.8" height="2.5" fill="#ffbb00" opacity="0.8"/>
<rect x="452.8" y="286.0" width="1.8" height="3" fill="#ffbb00" opacity="0.8"/>
<rect x="452.8" y="290.5" width="1.8" height="2.5" fill="#ffbb00" opacity="0.8"/>
<rect x="452.8" y="295.0" width="1.8" height="2" fill="#ffdd00" opacity="0.8"/>
<rect x="452.8" y="298.5" width="1.8" height="3" fill="#ff9900" opacity="0.8"/>
<rect x="452.8" y="303.5" width="1.8" height="3" fill="#ff9900" opacity="0.8"/>
<rect x="452.8" y="308.5" width="1.8" height="2" fill="#ffdd00" opacity="0.8"/>
<rect x="452.8" y="312.5" width="1.8" height="2" fill="#ffdd00" opacity="0.8"/>
<rect x="452.8" y="317.0" width="1.8" height="2.5" fill="#ffbb00" opacity="0.8"/>
<rect x="452.8" y="321.0" width="1.8" height="2" fill="#ffdd00" opacity="0.8"/>
<rect x="452.8" y="325.0" width="1.8" height="3" fill="#ff9900" opacity="0.8"/>
<rect x="452.8" y="330.5" width="1.8" height="3" fill="#ffbb00" opacity="0.8"/>
<rect x="452.8" y="335.5" width="1.8" height="2.5" fill="#ff9900" opacity="0.8"/>
<rect x="452.8" y="340.5" width="1.8" height="2" fill="#ffdd00" opacity="0.8"/>
<rect x="452.8" y="344.5" width="1.8" height="2" fill="#ffdd00" opacity="0.8"/>
<rect x="452.8" y="348.0" width="1.8" height="3" fill="#ffdd00" opacity="0.8"/>
<rect x="452.8" y="352.5" width="1.8" height="3" fill="#ffbb00" opacity="0.8"/>
<rect x="452.8" y="358.0" width="1.8" height="2" fill="#ff9900" opacity="0.8"/>
<rect x="452.8" y="362.5" width="1.8" height="3" fill="#ff9900" opacity="0.8"/>
<rect x="452.8" y="367.5" width="1.8" height="2" fill="#ffbb00" opacity="0.8"/>
<rect x="452.8" y="372.0" width="1.8" height="2.5" fill="#ff9900" opacity="0.8"/>
<rect x="456.8" y="203.0" width="4" height="2.5" fill="#ffee00" opacity="0.8"/>
<rect x="456.8" y="208.0" width="4" height="2.5" fill="#ffee00" opacity="0.8"/>
<rect x="456.8" y="212.0" width="4" height="3" fill="#ffee00" opacity="0.8"/>
<rect x="456.8" y="217.0" width="4" height="3" fill="#ffee00" opacity="0.8"/>
<rect x="456.8" y="221.5" width="4" height="3" fill="#ffee00" opacity="0.8"/>
<rect x="456.8" y="226.0" width="4" height="2.5" fill="#ffee00" opacity="0.8"/>
<rect x="456.8" y="230.0" width="4" height="2.5" fill="#ffee00" opacity="0.8"/>
<rect x="456.8" y="234.0" width="4" height="2" fill="#ffee00" opacity="0.8"/>
<rect x="456.8" y="237.5" width="4" height="2.5" fill="#ffee00" opacity="0.8"/>
<rect x="456.8" y="241.5" width="4" height="2.5" fill="#ffee00" opacity="0.8"/>
<rect x="456.8" y="245.5" width="4" height="2" fill="#ffee00" opacity="0.8"/>
<rect x="456.8" y="249.5" width="4" height="3" fill="#ffee00" opacity="0.8"/>
<rect x="456.8" y="255.0" width="4" height="3" fill="#ffee00" opacity="0.8"/>
<rect x="456.8" y="260.0" width="4" height="2.5" fill="#ffee00" opacity="0.8"/>
<rect x="456.8" y="264.5" width="4" height="2" fill="#ffee00" opacity="0.8"/>
<rect x="456.8" y="268.5" width="4" height="2.5" fill="#ffee00" opacity="0.8"/>
<rect x="456.8" y="273.0" width="4" height="3" fill="#ffee00" opacity="0.8"/>
<rect x="456.8" y="278.5" width="4" height="3" fill="#ffee00" opacity="0.8"/>
<rect x="456.8" y="283.5" width="4" height="3" fill="#ff9900" opacity="0.8"/>
<rect x="456.8" y="288.0" width="4" height="2" fill="#ffbb00" opacity="0.8"/>
<rect x="456.8" y="292.5" width="4" height="2.5" fill="#ff9900" opacity="0.8"/>
<rect x="456.8" y="297.0" width="4" height="2" fill="#ff9900" opacity="0.8"/>
<rect x="456.8" y="300.5" width="4" height="2.5" fill="#ff9900" opacity="0.8"/>
<rect x="456.8" y="304.5" width="4" height="2.5" fill="#ffbb00" opacity="0.8"/>
<rect x="456.8" y="308.5" width="4" height="2.5" fill="#ffbb00" opacity="0.8"/>
<rect x="456.8" y="313.0" width="4" height="2" fill="#ffdd00" opacity="0.8"/>
<rect x="456.8" y="316.5" width="4" height="2" fill="#ff9900" opacity="0.8"/>
<rect x="456.8" y="321.0" width="4" height="3" fill="#ffdd00" opacity="0.8"/>
<rect x="456.8" y="326.0" width="4" height="2" fill="#ffbb00" opacity="0.8"/>
<rect x="456.8" y="329.5" width="4" height="2.5" fill="#ffbb00" opacity="0.8"/>
<rect x="456.8" y="334.0" width="4" height="2" fill="#ffbb00" opacity="0.8"/>
<rect x="456.8" y="338.5" width="4" height="2" fill="#ffbb00" opacity="0.8"/>
<rect x="456.8" y="342.0" width="4" height="2.5" fill="#ffdd00" opacity="0.8"/>
<rect x="456.8" y="346.5" width="4" height="2" fill="#ff9900" opacity="0.8"/>
<rect x="456.8" y="350.5" width="4" height="2" fill="#ffdd00" opacity="0.8"/>
<rect x="456.8" y="354.5" width="4" height="2.5" fill="#ffbb00" opacity="0.8"/>
<rect x="456.8" y="359.0" width="4" height="2" fill="#ffdd00" opacity="0.8"/>
<rect x="456.8" y="362.5" width="4" height="2.5" fill="#ff9900" opacity="0.8"/>
<rect x="456.8" y="367.0" width="4" height="3" fill="#ffbb00" opacity="0.8"/>
<rect x="456.8" y="371.5" width="4" height="2.5" fill="#ffbb00" opacity="0.8"/>
<rect x="464" y="203.0" width="1.8" height="2" fill="#ffee00" opacity="0.8"/>
<rect x="464" y="207.0" width="1.8" height="2.5" fill="#ffee00" opacity="0.8"/>
<rect x="464" y="211.5" width="1.8" height="2" fill="#ffee00" opacity="0.8"/>
<rect x="464" y="216.0" width="1.8" height="3" fill="#ffee00" opacity="0.8"/>
<rect x="464" y="221.0" width="1.8" height="2" fill="#ffee00" opacity="0.8"/>
<rect x="464" y="224.5" width="1.8" height="2.5" fill="#ffee00" opacity="0.8"/>
<rect x="464" y="229.5" width="1.8" height="2" fill="#ffee00" opacity="0.8"/>
<rect x="464" y="233.0" width="1.8" height="2.5" fill="#ffee00" opacity="0.8"/>
<rect x="464" y="237.5" width="1.8" height="2.5" fill="#ffee00" opacity="0.8"/>
<rect x="464" y="242.0" width="1.8" height="2.5" fill="#ffee00" opacity="0.8"/>
<rect x="464" y="246.0" width="1.8" height="3" fill="#ffee00" opacity="0.8"/>
<rect x="464" y="251.0" width="1.8" height="2" fill="#ffee00" opacity="0.8"/>
<rect x="464" y="255.0" width="1.8" height="2" fill="#ffee00" opacity="0.8"/>
<rect x="464" y="259.0" width="1.8" height="3" fill="#ffee00" opacity="0.8"/>
<rect x="464" y="264.5" width="1.8" height="2.5" fill="#ffee00" opacity="0.8"/>
<rect x="464" y="269.0" width="1.8" height="2" fill="#ffee00" opacity="0.8"/>
<rect x="464" y="273.0" width="1.8" height="2" fill="#ffee00" opacity="0.8"/>
<rect x="464" y="276.5" width="1.8" height="2.5" fill="#ffee00" opacity="0.8"/>
<rect x="464" y="281.0" width="1.8" height="2.5" fill="#ff9900" opacity="0.8"/>
<rect x="464" y="285.5" width="1.8" height="2.5" fill="#ff9900" opacity="0.8"/>
<rect x="464" y="290.5" width="1.8" height="2.5" fill="#ffdd00" opacity="0.8"/>
<rect x="464" y="294.5" width="1.8" height="2.5" fill="#ff9900" opacity="0.8"/>
<rect x="464" y="298.5" width="1.8" height="2.5" fill="#ff9900" opacity="0.8"/>
<rect x="464" y="303.0" width="1.8" height="2.5" fill="#ffbb00" opacity="0.8"/>
<rect x="464" y="307.5" width="1.8" height="3" fill="#ffbb00" opacity="0.8"/>
<rect x="464" y="312.0" width="1.8" height="2.5" fill="#ffdd00" opacity="0.8"/>
<rect x="464" y="316.0" width="1.8" height="2" fill="#ffbb00" opacity="0.8"/>
<rect x="464" y="319.5" width="1.8" height="2.5" fill="#ff9900" opacity="0.8"/>
<rect x="464" y="323.5" width="1.8" height="3" fill="#ffbb00" opacity="0.8"/>
<rect x="464" y="328.5" width="1.8" height="2" fill="#ffdd00" opacity="0.8"/>
<rect x="464" y="333.0" width="1.8" height="3" fill="#ffbb00" opacity="0.8"/>
<rect x="464" y="337.5" width="1.8" height="2.5" fill="#ffbb00" opacity="0.8"/>
<rect x="464" y="342.0" width="1.8" height="3" fill="#ff9900" opacity="0.8"/>
<rect x="464" y="347.0" width="1.8" height="2" fill="#ffdd00" opacity="0.8"/>
<rect x="464" y="351.0" width="1.8" height="2.5" fill="#ff9900" opacity="0.8"/>
<rect x="464" y="355.5" width="1.8" height="3" fill="#ff9900" opacity="0.8"/>
<rect x="464" y="360.0" width="1.8" height="3" fill="#ffdd00" opacity="0.8"/>
<rect x="464" y="365.0" width="1.8" height="3" fill="#ff9900" opacity="0.8"/>
<rect x="464" y="370.5" width="1.8" height="3" fill="#ffbb00" opacity="0.8"/>
<rect x="483.5" y="203" width="2.4" height="172" fill="#ffea00"/>
<rect x="484" y="320" width="2" height="30" fill="#ff4000" opacity="0.7"/>
<rect x="396" y="203" width="1.4" height="172" fill="#ffff40"/>
<g fill="none" stroke-width="2.4" clip-path="url(#bandClip)">
<ellipse cx="449" cy="289" rx="54" ry="48" stroke="#ff3300" opacity="0.9" stroke-width="2.6"/>
<ellipse cx="449" cy="289" rx="55" ry="59" stroke="#ff3a00" opacity="0.85" stroke-width="2.4"/>
<ellipse cx="449" cy="289" rx="61" ry="67" stroke="#ff3300" opacity="0.8" stroke-width="2.4"/>
<ellipse cx="449" cy="289" rx="68" ry="74" stroke="#ff4400" opacity="0.75" stroke-width="2.2"/>
<ellipse cx="449" cy="289" rx="76" ry="82" stroke="#ff6600" opacity="0.6" stroke-width="2.0"/>
<ellipse cx="449" cy="289" rx="50" ry="40" stroke="#ff8800" opacity="0.45" stroke-width="2"/>
<ellipse cx="449" cy="289" rx="46" ry="30" stroke="#ffa000" opacity="0.35" stroke-width="2"/>
<ellipse cx="449" cy="289" rx="58" ry="53" stroke="#ff7000" opacity="0.5" stroke-width="1.2"/>
<ellipse cx="449" cy="289" rx="64" ry="71" stroke="#ff7000" opacity="0.45" stroke-width="1.2"/>
</g>
<rect x="397" y="296" width="2" height="20" fill="#ff3000" opacity="0.7"/>
<rect x="220" y="209.8" width="468" height="2.8" fill="rgb(165,255,0)"/>
</g>
</g>
<rect x="219.5" y="197.5" width="469.0" height="180.0" fill="none" stroke="#000" stroke-width="1.3"/>
<line x1="208" y1="374.5" x2="219.5" y2="374.5" stroke="#000" stroke-width="1"/>
<line x1="214" y1="344.5" x2="219.5" y2="344.5" stroke="#000" stroke-width="1"/>
<line x1="214" y1="326.5" x2="219.5" y2="326.5" stroke="#000" stroke-width="1"/>
<line x1="214" y1="314.5" x2="219.5" y2="314.5" stroke="#000" stroke-width="1"/>
<line x1="214" y1="304.5" x2="219.5" y2="304.5" stroke="#000" stroke-width="1"/>
<line x1="214" y1="296.5" x2="219.5" y2="296.5" stroke="#000" stroke-width="1"/>
<line x1="214" y1="289.5" x2="219.5" y2="289.5" stroke="#000" stroke-width="1"/>
<line x1="214" y1="283.5" x2="219.5" y2="283.5" stroke="#000" stroke-width="1"/>
<line x1="214" y1="278.5" x2="219.5" y2="278.5" stroke="#000" stroke-width="1"/>
<line x1="208" y1="274.5" x2="219.5" y2="274.5" stroke="#000" stroke-width="1"/>
<line x1="214" y1="243.5" x2="219.5" y2="243.5" stroke="#000" stroke-width="1"/>
<line x1="214" y1="225.5" x2="219.5" y2="225.5" stroke="#000" stroke-width="1"/>
<line x1="214" y1="213.5" x2="219.5" y2="213.5" stroke="#000" stroke-width="1"/>
<line x1="214" y1="203.5" x2="219.5" y2="203.5" stroke="#000" stroke-width="1"/>
<text x="174.0" y="283.0" font-size="16" font-weight="normal" fill="#000" text-anchor="start" textLength="20.0" lengthAdjust="spacingAndGlyphs" >10</text>
<text x="193.6" y="274.5" font-size="16" font-weight="normal" fill="#000" text-anchor="start" textLength="10.0" lengthAdjust="spacingAndGlyphs" >5</text>
<text x="174.0" y="383.5" font-size="16" font-weight="normal" fill="#000" text-anchor="start" textLength="20.0" lengthAdjust="spacingAndGlyphs" >10</text>
<text x="193.6" y="376.2" font-size="16" font-weight="normal" fill="#000" text-anchor="start" textLength="10.0" lengthAdjust="spacingAndGlyphs" >4</text>
<text transform="translate(160.9,298.2) rotate(-90)" font-size="16" textLength="20.0" lengthAdjust="spacingAndGlyphs">Hz</text>
<line x1="220.5" y1="377.5" x2="220.5" y2="383.0" stroke="#000" stroke-width="1"/>
<line x1="238.5" y1="377.5" x2="238.5" y2="389.0" stroke="#000" stroke-width="1"/>
<line x1="256.5" y1="377.5" x2="256.5" y2="383.0" stroke="#000" stroke-width="1"/>
<line x1="274.5" y1="377.5" x2="274.5" y2="383.0" stroke="#000" stroke-width="1"/>
<line x1="292.5" y1="377.5" x2="292.5" y2="383.0" stroke="#000" stroke-width="1"/>
<line x1="310.5" y1="377.5" x2="310.5" y2="383.0" stroke="#000" stroke-width="1"/>
<line x1="328.5" y1="377.5" x2="328.5" y2="383.0" stroke="#000" stroke-width="1"/>
<line x1="346.5" y1="377.5" x2="346.5" y2="383.0" stroke="#000" stroke-width="1"/>
<line x1="364.5" y1="377.5" x2="364.5" y2="383.0" stroke="#000" stroke-width="1"/>
<line x1="382.5" y1="377.5" x2="382.5" y2="383.0" stroke="#000" stroke-width="1"/>
<line x1="400.5" y1="377.5" x2="400.5" y2="383.0" stroke="#000" stroke-width="1"/>
<line x1="418.5" y1="377.5" x2="418.5" y2="383.0" stroke="#000" stroke-width="1"/>
<line x1="436.5" y1="377.5" x2="436.5" y2="383.0" stroke="#000" stroke-width="1"/>
<line x1="454.5" y1="377.5" x2="454.5" y2="389.0" stroke="#000" stroke-width="1"/>
<line x1="472.5" y1="377.5" x2="472.5" y2="383.0" stroke="#000" stroke-width="1"/>
<line x1="490.5" y1="377.5" x2="490.5" y2="383.0" stroke="#000" stroke-width="1"/>
<line x1="508.5" y1="377.5" x2="508.5" y2="383.0" stroke="#000" stroke-width="1"/>
<line x1="526.5" y1="377.5" x2="526.5" y2="383.0" stroke="#000" stroke-width="1"/>
<line x1="544.5" y1="377.5" x2="544.5" y2="383.0" stroke="#000" stroke-width="1"/>
<line x1="562.5" y1="377.5" x2="562.5" y2="383.0" stroke="#000" stroke-width="1"/>
<line x1="580.5" y1="377.5" x2="580.5" y2="383.0" stroke="#000" stroke-width="1"/>
<line x1="598.5" y1="377.5" x2="598.5" y2="383.0" stroke="#000" stroke-width="1"/>
<line x1="616.5" y1="377.5" x2="616.5" y2="383.0" stroke="#000" stroke-width="1"/>
<line x1="634.5" y1="377.5" x2="634.5" y2="383.0" stroke="#000" stroke-width="1"/>
<line x1="652.5" y1="377.5" x2="652.5" y2="383.0" stroke="#000" stroke-width="1"/>
<line x1="670.5" y1="377.5" x2="670.5" y2="389.0" stroke="#000" stroke-width="1"/>
<line x1="688.5" y1="377.5" x2="688.5" y2="383.0" stroke="#000" stroke-width="1"/>
<text x="215.7" y="409.0" font-size="16" font-weight="normal" fill="#000" text-anchor="start" textLength="45.2" lengthAdjust="spacingAndGlyphs" >00:00</text>
<text x="215.7" y="424.6" font-size="16" font-weight="normal" fill="#000" text-anchor="start" textLength="91.2" lengthAdjust="spacingAndGlyphs" >2012-12-02</text>
<text x="647.6" y="408.8" font-size="16" font-weight="normal" fill="#000" text-anchor="start" textLength="45.2" lengthAdjust="spacingAndGlyphs" >00:00</text>
<text x="647.6" y="424.9" font-size="16" font-weight="normal" fill="#000" text-anchor="start" textLength="91.2" lengthAdjust="spacingAndGlyphs" >2012-12-03</text>
<rect x="704" y="198" width="16.5" height="179.2" fill="url(#cbar)"/>
<line x1="720.5" y1="197.5" x2="720.5" y2="378" stroke="#000" stroke-width="1"/>
<line x1="720.5" y1="204.5" x2="726" y2="204.5" stroke="#000" stroke-width="1"/>
<line x1="720.5" y1="217.5" x2="732" y2="217.5" stroke="#000" stroke-width="1"/>
<line x1="720.5" y1="231.5" x2="726" y2="231.5" stroke="#000" stroke-width="1"/>
<line x1="720.5" y1="244.5" x2="732" y2="244.5" stroke="#000" stroke-width="1"/>
<line x1="720.5" y1="257.5" x2="726" y2="257.5" stroke="#000" stroke-width="1"/>
<line x1="720.5" y1="271.5" x2="732" y2="271.5" stroke="#000" stroke-width="1"/>
<line x1="720.5" y1="284.5" x2="726" y2="284.5" stroke="#000" stroke-width="1"/>
<line x1="720.5" y1="297.5" x2="732" y2="297.5" stroke="#000" stroke-width="1"/>
<line x1="720.5" y1="310.5" x2="726" y2="310.5" stroke="#000" stroke-width="1"/>
<line x1="720.5" y1="324.5" x2="732" y2="324.5" stroke="#000" stroke-width="1"/>
<line x1="720.5" y1="337.5" x2="726" y2="337.5" stroke="#000" stroke-width="1"/>
<line x1="720.5" y1="350.5" x2="732" y2="350.5" stroke="#000" stroke-width="1"/>
<line x1="720.5" y1="364.5" x2="726" y2="364.5" stroke="#000" stroke-width="1"/>
<line x1="720.5" y1="377.5" x2="732" y2="377.5" stroke="#000" stroke-width="1"/>
<text x="736.6" y="226.8" font-size="16" font-weight="normal" fill="#000" text-anchor="start" textLength="20.0" lengthAdjust="spacingAndGlyphs" >10</text>
<text x="756.0" y="218.8" font-size="16" font-weight="normal" fill="#000" text-anchor="start" textLength="25.6" lengthAdjust="spacingAndGlyphs" >-10</text>
<text x="736.6" y="253.4" font-size="16" font-weight="normal" fill="#000" text-anchor="start" textLength="20.0" lengthAdjust="spacingAndGlyphs" >10</text>
<text x="756.0" y="245.4" font-size="16" font-weight="normal" fill="#000" text-anchor="start" textLength="25.6" lengthAdjust="spacingAndGlyphs" >-12</text>
<text x="736.6" y="280.0" font-size="16" font-weight="normal" fill="#000" text-anchor="start" textLength="20.0" lengthAdjust="spacingAndGlyphs" >10</text>
<text x="756.0" y="272.0" font-size="16" font-weight="normal" fill="#000" text-anchor="start" textLength="25.6" lengthAdjust="spacingAndGlyphs" >-14</text>
<text x="736.6" y="306.6" font-size="16" font-weight="normal" fill="#000" text-anchor="start" textLength="20.0" lengthAdjust="spacingAndGlyphs" >10</text>
<text x="756.0" y="298.6" font-size="16" font-weight="normal" fill="#000" text-anchor="start" textLength="25.6" lengthAdjust="spacingAndGlyphs" >-16</text>
<text x="736.6" y="333.2" font-size="16" font-weight="normal" fill="#000" text-anchor="start" textLength="20.0" lengthAdjust="spacingAndGlyphs" >10</text>
<text x="756.0" y="325.2" font-size="16" font-weight="normal" fill="#000" text-anchor="start" textLength="25.6" lengthAdjust="spacingAndGlyphs" >-18</text>
<text x="736.6" y="359.8" font-size="16" font-weight="normal" fill="#000" text-anchor="start" textLength="20.0" lengthAdjust="spacingAndGlyphs" >10</text>
<text x="756.0" y="351.8" font-size="16" font-weight="normal" fill="#000" text-anchor="start" textLength="25.6" lengthAdjust="spacingAndGlyphs" >-20</text>
<text x="736.6" y="386.4" font-size="16" font-weight="normal" fill="#000" text-anchor="start" textLength="20.0" lengthAdjust="spacingAndGlyphs" >10</text>
<text x="756.0" y="378.4" font-size="16" font-weight="normal" fill="#000" text-anchor="start" textLength="25.6" lengthAdjust="spacingAndGlyphs" >-22</text>
<text transform="translate(805.0,339.5) rotate(-90)" font-size="16" textLength="102.9" lengthAdjust="spacingAndGlyphs">V^2/m^2/Hz</text>
<text x="294.9" y="414.0" font-size="16" font-weight="normal" fill="#000" text-anchor="start" textLength="150.1" lengthAdjust="spacingAndGlyphs" >RBSP-A/ECT-HOPE  </text>
<text x="612.0" y="414.0" font-size="16" font-weight="normal" fill="#000" text-anchor="end" textLength="86.6" lengthAdjust="spacingAndGlyphs" >Tperp/Tpar</text>
<g id="line">
<polyline fill="none" stroke="#000" stroke-width="1" stroke-linejoin="miter" shape-rendering="crispEdges" points="220.20,547.0 220.22,508.1 220.44,490.6 220.66,503.5 220.88,535.7 221.10,484.3 221.32,511.8 221.54,516.5 221.76,519.2 221.98,502.7 222.20,489.1 222.42,483.6 222.64,523.2 222.86,503.5 223.08,510.9 223.30,484.4 223.52,499.2 223.74,483.1 223.96,497.8 224.18,500.0 224.40,493.9 224.62,485.7 224.84,499.6 225.06,476.1 225.28,480.3 225.50,503.7 225.72,477.7 225.94,495.4 226.16,501.3 226.38,470.9 226.60,493.5 226.82,477.4 227.04,500.0 227.26,489.8 227.48,472.6 227.70,486.2 227.92,487.5 228.14,492.8 228.50,460.0 228.58,483.3 228.80,489.9 229.02,477.7 229.24,489.1 229.46,460.5 229.68,483.3 229.90,478.9 230.12,479.2 230.34,494.0 230.56,472.0 230.78,464.5 231.00,474.3 231.22,461.5 231.44,462.1 231.66,473.6 231.88,468.7 232.10,464.4 232.32,460.8 232.54,472.0 232.76,462.8 233.00,454.0 233.20,477.1 233.42,467.1 233.64,484.5 233.86,458.6 234.08,482.5 234.30,476.4 234.52,475.4 234.74,486.3 234.96,474.8 235.18,477.4 235.40,492.5 235.62,484.8 235.84,486.4 236.06,501.9 236.28,500.5 236.50,492.5 236.72,491.9 236.94,472.6 237.16,504.8 237.38,496.4 237.60,485.0 237.82,478.9 238.04,501.6 238.26,495.4 238.48,510.9 238.70,485.5 238.92,484.0 239.14,480.7 239.36,496.9 239.58,506.7 239.80,483.4 240.02,521.0 240.24,511.9 240.46,511.5 240.68,502.5 240.90,506.6 241.12,519.0 241.34,498.8 241.56,505.9 241.78,527.1 242.00,504.9 242.22,501.8 242.44,525.5 242.66,525.8 242.88,500.8 243.10,503.0 243.32,529.3 243.54,505.2 243.76,513.0 243.98,511.5 244.20,520.8 244.42,517.6 244.64,528.7 244.86,509.8 245.08,526.1 245.30,523.3 245.52,508.4 245.74,505.8 245.96,505.1 246.18,512.6 246.40,519.7 246.62,524.1 246.84,506.0 247.06,517.2 247.28,523.6 247.50,513.8 247.72,522.8 247.94,531.7 248.16,524.4 248.38,530.9 248.60,520.1 248.82,527.8 249.04,540.1 249.26,532.7 249.48,525.4 249.70,539.0 249.92,530.0 250.14,538.5 250.36,533.9 250.58,542.6 250.80,533.1 251.02,531.8 251.24,545.5 251.46,533.6 251.68,541.5 251.90,538.7 252.12,538.4 252.34,548.7 252.56,539.6 252.78,543.4 253.00,545.3 253.22,538.1 253.44,549.5 253.66,544.8 253.88,559.3 254.10,550.8 254.32,547.0 254.54,556.7 254.76,543.9 254.98,559.3 255.20,555.0 255.42,559.0 255.64,558.5 255.86,549.0 256.08,557.3 256.30,563.3 256.52,555.3 256.74,555.7 257.00,570.0 257.18,558.3 257.40,560.6 257.62,555.8 257.84,563.7 258.06,562.6 258.28,556.5 258.50,559.6 258.72,560.8 258.94,561.1 259.16,556.7 259.38,559.6 259.60,566.1 259.82,564.4 260.04,560.5 260.26,564.9 260.48,559.1 260.70,556.8 260.92,559.8 261.14,554.8 261.36,562.3 261.58,565.9 261.80,560.3 262.02,558.2 262.24,557.0 262.46,557.9 262.68,556.5 262.90,558.8 263.12,555.8 263.34,563.4 263.56,560.6 263.78,562.8 264.00,566.7 264.22,567.3 264.44,567.4 264.66,558.8 264.88,562.6 265.10,559.0 265.32,555.8 265.54,553.2 265.76,563.2 265.98,558.0 266.20,564.2 266.42,554.7 266.64,558.5 266.86,561.1 267.08,557.7 267.30,554.5 267.52,563.7 267.74,558.4 267.96,568.4 268.18,566.8 268.40,562.8 268.62,560.3 268.84,564.4 269.06,561.5 269.28,562.4 269.50,559.7 269.72,561.6 269.94,563.7 270.16,570.1 270.38,562.6 270.60,569.6 270.82,572.4 271.04,573.3 271.26,572.9 271.48,563.9 271.70,566.8 271.92,569.1 272.14,569.9 272.36,564.4 272.58,568.1 272.80,565.3 273.02,565.5 273.24,573.3 273.46,574.3 273.68,567.9 273.90,572.9 274.12,572.0 274.34,570.4 274.56,565.9 274.78,571.8 275.00,576.7 275.22,570.9 275.44,572.8 275.66,577.3 275.88,576.9 276.10,569.6 276.32,578.2 276.54,577.8 276.76,574.0 276.98,570.6 277.20,575.5 277.42,577.4 277.64,572.6 277.86,569.4 278.08,573.7 278.30,570.1 278.52,569.8 278.74,573.5 278.96,577.9 279.18,568.7 279.40,569.7 279.62,574.8 279.84,577.1 280.06,577.7 280.28,567.9 280.50,580.7 280.72,576.1 280.94,572.3 281.16,577.7 281.38,578.3 281.60,572.4 281.82,568.2 282.04,579.5 282.26,570.8 282.48,571.9 282.70,566.0 282.92,580.6 283.14,573.7 283.36,570.0 283.58,572.7 283.80,567.9 284.02,574.8 284.24,576.6 284.46,571.3 284.68,576.0 284.90,573.5 285.12,577.3 285.34,579.2 285.56,580.7 285.78,579.6 286.00,581.8 286.22,566.0 286.44,573.8 286.66,565.1 286.88,568.8 287.10,567.4 287.32,576.5 287.54,570.7 287.76,581.4 287.98,576.0 288.20,577.8 288.42,565.3 288.64,572.5 288.86,579.7 289.08,572.7 289.30,576.1 289.52,571.2 289.74,569.1 289.96,571.1 290.18,574.4 290.40,565.9 290.62,565.1 290.84,573.4 291.06,576.4 291.28,582.2 291.50,581.1 291.72,566.3 291.94,568.9 292.16,576.0 292.38,575.0 292.60,566.6 292.82,569.5 293.04,577.7 293.26,565.1 293.48,564.7 293.70,570.2 293.92,574.1 294.14,580.1 294.36,576.2 294.58,578.8 294.80,569.5 295.02,578.0 295.24,566.4 295.46,576.2 295.68,575.5 295.90,574.5 296.12,578.1 296.34,565.4 296.56,570.2 296.78,566.1 297.00,562.0 297.22,572.8 297.44,558.3 297.66,570.4 297.88,576.0 298.10,571.3 298.32,568.5 298.54,565.3 298.76,570.7 298.98,565.4 299.20,558.2 299.42,564.4 299.64,558.8 299.86,552.8 300.08,564.7 300.30,565.6 300.52,554.7 300.74,565.3 300.96,556.2 301.18,554.8 301.40,556.3 301.62,555.4 301.90,545.0 302.06,560.1 302.28,563.3 302.50,561.3 302.72,559.2 302.94,550.9 303.16,551.2 303.38,559.0 303.60,563.3 303.82,553.0 304.04,546.4 304.26,557.9 304.48,557.8 304.70,559.3 304.92,552.7 305.14,543.9 305.36,557.5 305.58,545.0 305.80,552.7 306.02,554.7 306.24,549.7 306.46,560.4 306.68,549.4 306.90,555.4 307.12,545.4 307.34,546.4 307.56,551.2 307.78,548.8 308.00,538.0 308.22,551.5 308.44,550.8 308.66,560.2 308.88,548.4 309.10,552.5 309.32,554.1 309.54,547.1 309.76,550.3 309.98,542.6 310.20,554.2 310.42,552.7 310.64,542.7 310.86,561.4 311.08,554.0 311.30,558.7 311.52,555.2 311.74,557.1 311.96,544.4 312.18,546.8 312.40,543.6 312.62,548.5 312.84,546.9 313.06,562.1 313.28,557.1 313.50,559.3 313.72,552.9 313.94,548.1 314.16,570.7 314.38,561.2 314.60,553.7 314.82,559.9 315.04,553.6 315.26,564.8 315.48,553.6 315.70,564.1 316.00,578.0 316.14,558.7 316.36,573.4 316.58,567.5 316.80,558.8 317.02,548.0 317.24,559.9 317.46,558.8 317.68,559.0 317.90,560.2 318.12,544.1 318.34,559.0 318.56,552.1 318.78,547.9 319.00,557.3 319.22,540.4 319.44,534.5 319.66,544.8 319.88,549.7 320.10,554.8 320.32,556.4 320.54,540.6 320.76,556.7 320.98,536.9 321.20,552.7 321.42,542.5 321.64,525.2 321.86,552.5 322.08,536.1 322.30,523.2 322.52,539.9 322.74,533.8 322.96,520.8 323.18,530.8 323.40,519.1 323.62,536.8 323.84,533.6 324.06,531.7 324.28,525.0 324.50,520.0 324.72,535.1 324.94,521.6 325.16,534.3 325.38,525.8 325.60,525.0 325.82,523.5 326.04,521.6 326.26,511.9 326.48,520.2 326.70,509.8 326.92,526.0 327.14,522.9 327.36,515.4 327.58,514.1 327.80,508.3 328.02,510.8 328.24,509.3 328.46,510.2 328.68,504.3 328.90,515.5 329.12,507.8 329.34,513.1 329.56,517.6 329.78,515.5 330.00,516.6 330.22,497.3 330.44,493.1 330.66,509.2 330.88,510.8 331.10,501.4 331.32,506.3 331.54,503.0 331.76,506.1 331.98,489.6 332.20,494.2 332.42,476.7 332.64,479.0 332.86,493.4 333.08,482.9 333.30,494.3 333.52,492.9 333.74,479.7 334.00,459.0 334.18,471.4 334.40,484.8 334.62,474.0 334.84,482.3 335.06,469.8 335.28,485.4 335.50,482.3 335.72,493.6 335.94,498.1 336.16,485.6 336.38,495.3 336.60,478.2 336.82,479.9 337.04,487.8 337.26,495.3 337.48,503.4 337.70,481.6 337.92,490.7 338.14,491.3 338.36,498.0 338.58,491.0 338.80,488.4 339.02,476.3 339.24,479.8 339.46,483.6 339.68,494.0 339.90,494.8 340.12,497.4 340.34,486.5 340.56,473.5 340.78,503.3 341.00,503.5 341.22,490.1 341.44,479.9 341.66,493.3 341.88,505.8 342.10,500.6 342.32,476.1 342.54,491.1 342.76,476.0 342.98,487.7 343.20,490.9 343.42,481.3 343.64,491.3 343.86,483.6 344.08,476.5 344.30,480.2 344.52,483.6 344.74,499.5 344.96,484.9 345.18,481.3 345.40,505.6 345.62,488.0 345.84,492.5 346.06,498.1 346.28,476.8 346.50,496.8 346.72,484.9 346.94,471.2 347.16,479.3 347.38,492.8 347.60,493.4 347.82,498.5 348.04,497.6 348.26,503.0 348.48,473.0 348.70,496.2 348.92,473.2 349.14,475.7 349.36,505.0 349.58,487.1 349.80,474.2 350.02,484.2 350.24,492.1 350.46,502.4 350.68,505.2 350.90,502.6 351.12,484.7 351.34,492.8 351.56,508.4 351.78,501.3 352.00,492.4 352.22,495.4 352.44,501.3 352.66,513.1 352.88,508.9 353.10,509.9 353.32,501.5 353.54,499.4 353.76,501.4 353.98,494.6 354.20,506.0 354.42,495.3 354.64,506.5 354.86,523.8 355.08,501.3 355.30,506.1 355.52,490.6 355.74,503.7 355.96,510.1 356.18,513.8 356.40,509.8 356.62,526.0 356.84,531.7 357.06,520.1 357.28,529.2 357.50,527.9 357.72,525.4 358.00,563.0 358.16,539.3 358.38,540.8 358.60,556.2 358.82,564.6 359.04,562.2 359.26,538.6 359.48,556.2 359.70,554.6 359.92,569.5 360.14,569.9 360.50,580.0 360.50,579.0"/>
<polyline fill="none" stroke="#000" stroke-width="1" stroke-linejoin="miter" shape-rendering="crispEdges" points="372.60,546.0 372.82,546.5 373.04,541.3 373.26,529.9 373.48,515.7 373.70,513.2 373.92,516.6 374.14,518.1 374.36,507.9 374.58,500.6 374.80,496.7 375.02,500.8 375.24,489.8 375.46,497.7 375.68,495.9 375.90,502.7 376.12,496.8 376.34,492.6 376.56,497.1 376.78,501.5 377.00,485.5 377.22,497.0 377.44,491.0 377.66,489.7 377.88,492.1 378.10,477.3 378.32,497.9 378.54,488.9 378.76,489.5 378.98,490.5 379.20,487.7 379.42,479.7 379.64,487.4 379.86,496.1 380.08,486.0 380.30,491.7 380.52,485.7 380.74,502.1 380.96,475.8 381.18,476.9 381.40,501.7 381.62,473.4 381.84,487.3 382.06,495.7 382.28,479.6 382.50,487.1 382.72,467.4 382.94,471.4 383.16,478.3 383.38,461.9 383.60,484.2 383.82,490.5 384.04,470.0 384.26,472.2 384.48,472.7 384.70,469.8 384.92,482.1 385.14,470.9 385.36,471.2 385.58,471.3 385.80,493.9 386.02,470.1 386.24,462.2 386.46,476.9 386.68,498.4 386.90,460.4 387.12,463.8 387.34,478.0 387.56,473.3 387.78,466.2 388.00,476.0 388.22,488.2 388.44,465.7 388.66,465.3 389.00,447.5 389.10,456.3 389.32,471.3 389.54,489.4 389.76,483.9 389.98,480.4 390.20,476.9 390.42,461.9 390.64,486.0 390.86,463.5 391.08,457.6 391.30,482.2 391.52,497.7 391.74,500.7 391.96,478.6 392.18,450.8 392.40,503.1 392.62,455.4 392.84,473.5 393.06,510.4 393.28,502.2 393.50,494.2 393.72,475.5 393.94,478.7 394.16,484.4 394.38,467.7 394.60,501.1 394.82,513.3 395.04,503.6 395.26,482.8 395.50,448.0 395.70,472.2 395.92,495.0 396.14,506.6 396.36,478.1 396.58,495.5 396.80,458.1 397.02,490.9 397.24,483.8 397.46,495.6 397.68,495.1 397.90,499.2 398.12,467.2 398.34,505.8 398.56,477.6 398.78,489.4 399.00,485.5 399.22,487.4 399.44,467.0 399.66,501.9 399.88,478.1 400.10,503.2 400.50,519.0 400.54,503.6 400.76,488.5 400.98,495.9 401.20,479.8 401.42,485.8 401.64,486.3 401.86,470.8 402.08,501.9 402.30,471.5 402.52,493.7 402.74,472.6 402.96,478.5 403.18,480.0 403.40,489.5 403.62,483.0 403.84,482.7 404.06,481.3 404.28,478.2 404.50,492.9 404.72,499.7 404.94,498.3 405.16,485.8 405.38,496.7 405.60,470.0 405.82,477.7 406.04,486.5 406.26,484.3 406.48,475.4 406.70,486.0 406.92,485.8 407.14,476.5 407.36,488.4 407.58,478.4 407.80,472.3 408.02,487.6 408.24,475.0 408.46,484.8 408.68,487.6 408.90,475.9 409.12,489.6 409.34,489.8 409.56,486.3 409.78,495.8 410.00,470.3 410.22,474.5 410.44,468.9 410.66,489.1 410.88,466.0 411.10,479.3 411.32,481.0 411.54,466.9 411.76,479.9 411.98,468.3 412.20,491.2 412.42,471.6 412.64,483.8 412.86,491.5 413.08,482.6 413.30,468.5 413.52,472.2 413.74,484.2 413.96,476.5 414.18,491.4 414.40,481.6 414.62,480.5 414.84,487.2 415.06,497.6 415.28,480.4 415.50,478.8 415.72,489.9 415.94,479.7 416.16,494.8 416.38,498.8 416.60,492.6 416.82,473.3 417.04,495.6 417.26,500.8 417.48,482.5 417.70,484.0 417.92,479.0 418.14,490.5 418.36,480.9 418.58,488.9 418.80,492.8 419.02,499.3 419.24,495.9 419.46,492.9 419.68,491.5 419.90,499.2 420.12,495.2 420.34,478.2 420.56,495.9 420.78,486.8 421.00,489.6 421.22,491.7 421.44,491.9 421.66,502.7 421.88,495.6 422.10,487.2 422.32,487.4 422.54,487.9 422.76,484.8 422.98,493.2 423.20,493.7 423.42,481.5 423.64,488.8 423.86,495.5 424.08,502.4 424.30,504.8 424.52,500.0 424.74,507.5 424.96,501.9 425.18,500.3 425.40,500.5 425.62,502.1 425.84,492.0 426.06,506.0 426.28,493.8 426.50,497.4 426.72,485.5 427.00,518.0 427.16,491.6 427.38,506.0 427.60,491.6 427.82,503.4 428.04,500.2 428.26,493.0 428.48,488.1 428.70,497.3 428.92,493.9 429.14,501.7 429.36,494.1 429.58,501.2 429.80,491.7 430.02,512.2 430.24,508.5 430.46,512.2 430.68,497.0 430.90,502.8 431.12,497.7 431.34,510.5 431.56,499.7 431.78,508.3 432.00,507.3 432.22,503.3 432.44,495.7 432.66,497.8 432.88,495.9 433.10,496.5 433.32,495.4 433.54,509.3 433.76,494.6 433.98,509.0 434.20,499.3 434.42,498.4 434.64,496.2 434.86,508.2 435.08,502.5 435.30,493.4 435.52,487.4 435.74,491.7 435.96,496.1 436.18,497.0 436.40,499.8 436.62,493.5 437.00,521.0 437.06,511.9 437.28,503.6 437.50,497.0 437.72,509.5 437.94,503.5 438.16,500.6 438.38,494.0 438.60,509.4 438.82,505.6 439.04,498.5 439.26,513.8 439.48,501.0 439.70,504.5 439.92,490.6 440.14,508.8 440.36,508.1 440.58,496.8 440.80,511.3 441.02,498.9 441.24,498.8 441.46,503.0 441.68,514.9 441.90,502.5 442.12,515.4 442.34,510.7 442.56,516.9 442.78,504.2 443.00,498.6 443.22,502.7 443.44,504.1 443.66,498.5 443.88,512.0 444.10,491.5 444.32,512.7 444.54,504.6 444.76,505.6 444.98,503.6 445.20,500.6 445.42,504.4 445.64,489.7 445.86,497.0 446.08,489.1 446.30,510.2 446.52,493.9 446.74,508.3 446.96,495.5 447.18,504.4 447.40,511.2 447.62,497.4 447.84,502.2 448.06,505.1 448.28,499.2 448.50,501.5 448.72,504.8 448.94,503.5 449.16,496.1 449.38,490.3 449.60,501.6 449.82,499.2 450.04,497.3 450.26,507.5 450.48,507.9 450.70,499.8 450.92,503.0 451.14,499.2 451.36,514.2 451.58,506.8 451.80,490.5 452.02,490.7 452.24,509.6 452.46,501.0 452.68,500.3 452.90,513.6 453.12,496.1 453.34,508.0 453.56,494.9 453.78,497.4 454.00,512.2 454.22,502.3 454.44,508.9 454.66,508.0 454.88,497.0 455.10,498.9 455.32,508.5 455.54,487.8 455.76,489.6 455.98,484.4 456.20,503.9 456.42,505.5 456.64,500.8 456.86,496.0 457.08,492.8 457.30,485.3 457.52,476.2 457.74,485.7 457.96,490.0 458.18,506.0 458.40,495.9 458.62,490.8 458.84,492.2 459.06,475.5 459.28,502.7 459.50,497.1 459.72,479.5 459.94,491.1 460.16,491.3 460.38,508.9 460.60,497.3 460.82,493.9 461.04,516.5 461.26,487.0 461.48,497.3 461.70,500.2 461.92,493.6 462.14,495.9 462.36,484.4 462.58,504.8 462.80,508.8 463.02,491.8 463.24,487.7 463.46,499.0 463.68,499.5 463.90,497.2 464.12,500.7 464.34,514.8 464.56,511.9 464.78,508.2 465.00,500.0 465.22,517.2 465.44,501.1 465.66,512.8 465.88,512.0 466.10,506.8 466.32,517.5 466.54,493.7 466.76,503.4 466.98,523.5 467.20,503.9 467.42,508.8 467.64,497.7 467.86,526.3 468.08,514.2 468.30,522.4 468.52,504.8 468.74,524.3 468.96,521.7 469.18,515.9 469.40,518.4 469.62,524.2 469.84,506.9 470.06,514.1 470.28,522.1 470.50,511.1 470.72,514.1 470.94,530.1 471.16,520.3 471.38,510.7 471.60,527.2 471.82,507.1 472.04,514.3 472.26,511.0 472.48,525.2 472.70,513.6 472.92,501.0 473.14,508.8 473.36,516.4 473.58,524.7 473.80,510.1 474.02,513.5 474.24,519.6 474.46,503.2 474.68,514.6 474.90,505.3 475.12,501.8 475.34,503.9 475.56,520.0 475.78,499.8 476.00,510.9 476.22,501.5 476.44,517.0 476.66,487.5 476.88,497.1 477.10,517.5 477.32,509.8 477.54,509.2 477.76,505.5 477.98,500.1 478.20,484.2 478.42,488.6 478.64,521.9 478.86,499.7 479.08,484.0 479.30,518.6 479.52,491.8 479.74,516.7 479.96,499.0 480.18,508.0 480.40,512.5 480.62,509.3 480.84,505.6 481.06,515.8 481.28,521.5 481.50,529.3 481.72,491.2 481.94,501.5 482.16,515.6 482.38,511.8 482.60,504.7 482.82,511.6 483.04,531.4 483.26,522.4 483.48,504.5 483.70,519.3 483.92,535.0 484.14,520.3 484.36,534.4 484.58,515.3 484.80,504.2 485.02,518.3 485.24,525.7 485.46,534.6 485.68,519.4 485.90,543.7 486.12,506.9 486.34,510.4 486.56,542.2 486.78,549.8 487.00,548.6 487.22,525.8 487.60,559.0 487.66,522.4 487.88,515.2 488.10,529.4 488.32,541.5 488.54,513.1 488.76,531.5 488.98,534.6 489.20,529.5 489.42,533.6 489.64,519.2 489.86,539.9 490.08,530.3 490.30,507.3 490.52,545.6 490.74,533.0 490.96,515.9 491.18,508.7 491.40,520.9 491.62,502.0 491.84,508.8 492.06,501.2 492.28,512.0 492.50,520.7 492.72,500.8 492.94,529.7 493.16,496.6 493.38,523.0 493.60,502.3 493.82,507.5 494.04,515.9 494.26,523.6 494.48,527.4 494.70,521.8 494.92,507.7 495.14,493.8 495.36,505.2 495.58,518.1 495.80,482.9 496.02,507.0 496.24,491.9 496.46,502.8 496.68,505.1 496.90,504.2 497.12,497.6 497.34,497.1 497.56,495.5 497.78,497.0 498.00,507.7 498.22,519.1 498.44,523.7 498.66,506.4 498.88,499.0 499.10,498.3 499.32,518.3 499.54,486.6 499.76,484.7 499.98,497.8 500.20,502.7 500.42,505.6 500.64,498.9 500.86,497.4 501.08,491.5 501.30,516.1 501.52,471.9 501.74,498.3 501.96,473.4 502.18,476.9 502.40,476.0 502.62,494.1 502.84,477.2 503.06,502.2 503.28,498.1 503.50,516.5 503.72,492.7 503.94,483.9 504.16,485.0 504.38,478.6 504.60,480.0 504.82,501.6 505.04,492.5 505.26,507.3 505.48,508.8 505.70,482.4 505.92,500.2 506.14,493.2 506.36,482.4 506.58,487.8 506.80,478.6 507.02,488.7 507.24,476.5 507.46,474.7 507.68,487.4 507.90,501.3 508.12,481.8 508.34,498.6 508.56,479.0 508.78,472.6 509.00,495.7 509.22,485.8 509.44,509.5 509.66,474.6 509.88,487.9 510.10,485.0 510.32,495.7 510.70,458.0 510.76,471.3 510.98,501.2 511.20,480.2 511.42,495.0 511.64,478.6 511.86,474.4 512.08,490.5 512.30,475.8 512.52,516.4 512.74,510.7 512.96,495.7 513.18,505.2 513.40,488.6 513.62,486.7 513.84,492.5 514.06,504.7 514.28,493.8 514.50,501.1 514.72,517.3 514.94,503.8 515.16,495.0 515.38,522.9 515.60,494.5 515.82,515.7 516.04,504.8 516.26,514.4 516.48,524.7 516.70,515.2 516.92,523.4 517.14,501.1 517.36,497.9 517.58,530.8 517.80,502.3 518.02,513.9 518.24,518.7 518.46,514.6 518.68,533.4 518.90,526.5 519.12,511.6 519.34,501.6 519.56,543.0 519.78,541.5 520.00,508.2 520.22,510.8 520.44,539.0 520.66,537.8 520.88,522.3 521.10,536.2 521.32,517.6 521.54,533.0 521.76,547.1 521.98,540.3 522.00,563.0"/>
<polyline fill="none" stroke="#000" stroke-width="1" stroke-linejoin="miter" shape-rendering="crispEdges" points="534.00,555.7 534.22,557.0 534.44,556.8 534.66,561.1 534.88,538.1 535.10,529.5 535.32,529.9 535.54,538.8 535.76,524.6 535.98,530.0 536.20,502.8 536.42,535.4 536.64,521.7 536.86,533.1 537.08,506.5 537.30,526.4 537.52,516.1 537.74,521.6 537.96,493.2 538.18,504.7 538.40,506.9 538.62,511.2 538.84,501.3 539.06,489.8 539.28,509.8 539.50,521.1 539.72,484.4 539.94,510.4 540.16,506.0 540.38,494.2 540.60,502.5 540.82,492.5 541.04,503.3 541.26,483.1 541.48,490.8 541.70,509.3 541.92,514.2 542.14,504.1 542.36,501.6 542.58,495.6 542.80,476.3 543.02,494.3 543.24,480.5 543.46,491.7 543.68,477.5 543.90,488.9 544.12,480.5 544.34,478.4 544.56,485.8 544.78,501.9 545.00,474.5 545.22,482.3 545.44,470.4 545.66,496.5 546.00,466.0 546.10,487.5 546.32,505.5 546.54,487.7 546.76,494.4 546.98,476.3 547.20,498.1 547.42,475.8 547.64,495.3 547.86,480.3 548.08,488.4 548.30,476.5 548.52,474.5 548.74,494.6 548.96,493.9 549.40,461.5 549.40,495.0 549.62,502.6 549.84,469.0 550.06,474.0 550.28,481.1 550.50,500.3 550.72,487.9 550.94,510.3 551.16,489.2 551.38,491.5 551.60,520.1 551.82,488.6 552.04,495.5 552.26,491.9 552.48,490.2 552.70,513.8 552.92,514.5 553.14,519.6 553.36,507.3 553.58,498.1 553.80,526.5 554.02,517.2 554.24,513.3 554.46,525.6 554.68,519.8 554.90,528.8 555.12,529.4 555.34,525.1 555.56,512.5 555.78,517.8 556.00,535.1 556.22,511.9 556.44,521.2 556.66,514.9 556.88,535.7 557.10,535.2 557.32,511.2 557.54,535.9 557.76,514.9 557.98,513.2 558.20,536.7 558.42,550.8 558.64,516.6 558.86,550.7 559.08,561.8 559.30,547.2 559.52,562.2 559.74,528.1 559.96,566.9 560.18,540.0 560.40,568.2 560.62,530.3 560.84,542.0 561.06,545.7 561.28,556.0 561.50,549.1 561.72,557.0 561.94,537.8 562.16,558.9 562.38,563.2 562.60,533.0 562.82,535.0 563.04,561.8 563.26,559.6 563.48,566.1 563.70,536.7 563.92,580.0 564.14,558.4 564.36,581.2 564.58,569.4 564.80,571.6 565.02,566.4 565.24,560.0 565.46,572.6 565.68,559.6 566.00,596.0 566.12,543.9 566.50,595.0 566.56,553.7 566.78,567.9 567.00,558.3 567.22,555.2 567.44,550.6 567.66,578.3 567.88,562.4 568.10,559.5 568.32,568.7 568.54,589.7 568.76,574.6 568.98,577.7 569.20,593.4 569.42,570.2 569.64,569.9 569.86,582.0 570.08,586.7 570.30,567.5 570.52,569.7 570.74,583.7 570.96,568.8 571.18,570.2 571.40,574.7 571.62,584.1 571.84,588.0 572.06,579.0 572.28,590.4 572.50,561.7 572.72,579.0 572.94,565.2 573.16,590.9 573.38,588.3 573.60,574.9 573.82,601.8 574.04,569.5 574.26,582.4 574.48,601.1 574.70,600.0 574.92,595.7 575.14,591.0 575.36,585.5 575.58,587.1 575.80,590.1 576.02,589.9 576.24,600.6 576.46,602.8 576.68,578.2 576.90,603.5 577.12,600.1 577.34,602.1 577.56,602.1 577.78,585.3 578.00,580.2 578.22,587.9 578.44,585.9 578.66,580.0 578.88,594.7 579.10,598.5 579.32,579.1 579.54,583.2 579.76,585.4 579.98,579.7 580.20,572.2 580.42,596.6 580.64,592.4 580.86,591.7 581.08,597.6 581.30,576.4 581.52,582.3 581.74,580.8 581.96,589.4 582.18,578.5 582.40,583.8 582.62,577.4 582.84,599.6 583.06,588.9 583.28,586.6 583.50,588.4 583.72,595.8 583.94,593.6 584.16,596.5 584.38,582.4 584.60,601.5 584.82,587.2 585.04,591.3 585.26,594.4 585.48,595.4 585.70,585.6 585.92,587.4 586.14,589.4 586.36,588.4 586.58,594.0 586.80,587.1 587.02,587.1 587.24,593.9 587.46,579.3 587.68,597.0 587.90,587.9 588.12,586.9 588.34,584.5 588.56,596.5 588.78,594.8 589.00,584.6 589.22,592.1 589.44,587.6 589.66,603.0 589.88,597.0 590.10,579.8 590.32,592.1 590.54,585.8 590.76,580.8 590.98,586.1 591.20,588.0 591.42,594.2 591.64,598.6 591.86,601.0 592.08,589.9 592.30,600.0 592.52,596.3 592.74,589.0 592.96,578.2 593.18,587.1 593.40,596.2 593.62,595.8 593.84,593.9 594.06,603.4 594.28,597.1 594.50,590.7 594.72,596.4 594.94,600.3 595.16,603.4 595.38,589.4 595.60,595.5 595.82,594.5 596.04,595.0 596.26,588.3 596.48,604.1 596.70,588.8 596.92,598.4 597.14,598.5 597.36,597.3 597.58,604.1 597.80,584.7 598.20,614.0 598.24,608.1 598.46,605.6 598.68,590.6 598.90,585.4 599.12,600.2 599.34,589.9 599.56,579.4 599.78,587.3 600.00,588.3 600.22,585.8 600.44,602.1 600.66,590.4 600.88,598.2 601.10,594.0 601.32,598.5 601.54,583.1 601.76,605.2 601.98,592.6 602.20,588.9 602.42,586.7 602.64,589.3 602.86,585.6 603.08,586.3 603.30,589.4 603.52,581.5 603.74,586.5 603.96,584.0 604.18,588.0 604.40,576.9 604.62,576.8 604.84,587.9 605.06,589.0 605.28,597.1 605.50,592.0 605.72,593.3 605.94,578.0 606.16,589.8 606.38,580.7 606.60,594.8 606.82,581.3 607.04,595.0 607.26,591.9 607.48,576.3 607.70,582.0 607.92,590.0 608.14,581.5 608.36,576.2 608.58,582.9 608.80,594.1 609.02,580.0 609.24,595.4 609.46,578.6 609.68,595.1 609.90,576.5 610.12,588.8 610.34,580.9 610.56,590.7 610.78,578.4 611.00,594.8 611.22,588.7 611.44,573.4 611.66,591.8 611.88,582.2 612.10,581.2 612.32,585.2 612.54,585.5 612.76,570.8 612.98,588.4 613.20,576.7 613.42,585.7 613.64,571.4 613.86,580.7 614.08,580.2 614.30,586.8 614.52,577.5 614.74,570.6 614.96,583.9 615.18,589.7 615.40,588.8 615.62,581.2 615.84,590.2 616.06,579.6 616.28,573.0 616.50,575.7 616.72,585.1 616.94,571.4 617.16,582.5 617.38,573.3 617.60,586.0 617.82,578.4 618.04,579.9 618.26,580.4 618.48,570.0 618.70,590.0 618.92,592.9 619.14,575.1 619.36,584.4 619.58,577.7 619.80,572.8 620.02,579.2 620.24,577.1 620.46,583.0 620.68,574.8 620.90,575.2 621.12,585.5 621.34,582.0 621.56,586.5 621.78,589.4 622.00,578.9 622.22,571.3 622.44,578.9 622.66,565.7 622.88,572.9 623.10,576.2 623.32,574.6 623.54,588.1 623.76,579.6 623.98,568.8 624.20,565.0 624.42,569.6 624.64,563.7 624.86,577.9 625.08,567.2 625.30,570.3 625.52,572.4 625.74,577.9 625.96,577.9 626.18,565.6 626.40,572.2 626.62,583.6 626.84,565.0 627.06,570.5 627.28,570.6 627.50,576.5 627.72,558.7 627.94,572.6 628.16,574.8 628.38,556.5 628.60,570.6 628.82,552.5 629.04,562.9 629.26,566.3 629.48,564.7 629.70,555.7 629.92,557.1 630.14,575.6 630.36,560.9 630.58,558.6 630.80,571.8 631.02,561.0 631.24,576.4 631.46,570.0 631.68,555.5 631.90,566.5 632.12,546.9 632.34,549.3 632.56,549.1 632.78,544.1 633.00,572.2 633.22,572.3 633.44,548.7 633.66,568.2 633.88,556.8 634.10,565.5 634.32,568.9 634.54,558.9 634.76,548.4 634.98,535.3 635.20,554.7 635.42,550.2 635.64,560.8 635.86,550.6 636.08,556.5 636.30,533.4 636.52,537.2 636.74,545.4 636.96,551.9 637.18,527.9 637.40,553.6 637.62,555.5 637.84,556.2 638.06,538.2 638.28,558.3 638.50,551.0 638.72,541.8 638.94,538.4 639.16,517.4 639.40,514.0 639.60,548.7 639.82,539.5 640.04,548.1 640.26,534.4 640.48,545.7 640.70,566.9 640.92,559.2 641.14,562.7 641.36,544.7 641.58,551.3 641.80,542.1 642.02,569.4 642.24,532.3 642.46,557.5 642.68,531.0 642.90,558.2 643.12,567.7 643.34,534.8 643.56,557.9 643.78,562.0 644.00,571.3 644.22,549.3 644.44,547.7 644.66,558.9 644.88,550.2 645.10,547.0 645.32,571.7 645.54,546.3 645.76,580.6 645.98,551.0 646.20,544.1 646.42,552.9 646.64,568.8 646.86,572.7 647.08,569.7 647.30,549.6 647.52,569.9 647.74,576.1 647.96,576.4 648.18,551.2 648.40,555.3 648.62,568.5 648.84,565.7 649.06,570.1 649.28,557.1 649.50,586.4 649.72,570.7 649.94,559.8 650.16,557.4 650.38,578.3 650.60,577.6 650.82,582.9 651.04,557.6 651.26,577.1 651.48,561.8 651.70,571.1 651.92,573.8 652.14,561.6 652.36,586.7 652.58,550.3 652.80,574.4 653.02,559.1 653.24,585.8 653.46,550.8 653.68,582.7 653.90,584.1 654.12,571.8 654.34,571.1 654.56,563.0 654.78,562.0 655.00,550.8 655.22,562.0 655.44,581.5 655.66,574.2 655.88,572.1 656.10,564.0 656.32,561.9 656.54,543.3 656.76,561.2 656.98,545.0 657.20,550.7 657.42,568.2 657.64,555.3 657.86,558.5 658.08,559.1 658.30,540.1 658.52,560.8 658.74,542.4 658.96,571.1 659.18,567.1 659.40,531.4 659.62,531.1 659.84,562.1 660.06,547.0 660.28,536.4 660.50,556.1 660.72,525.1 660.94,550.2 661.16,524.1 661.38,540.0 661.60,551.3 661.82,532.9 662.04,527.2 662.26,538.0 662.48,535.7 662.70,525.3 662.92,552.8 663.14,524.0 663.50,508.0 663.58,518.6 663.80,531.9 664.02,518.5 664.24,502.7 664.46,531.0 664.68,514.6 664.90,541.3 665.12,527.5 665.34,512.8 665.56,525.2 665.78,522.6 666.00,501.4 666.22,530.3 666.44,521.2 666.66,512.8 666.88,517.2 667.10,497.2 667.32,502.7 667.54,520.2 667.76,519.1 667.98,501.8 668.20,494.7 668.42,534.7 668.64,521.0 668.86,544.6 669.08,508.5 669.30,506.9 669.60,595.0 669.74,511.4 669.96,521.9 670.18,497.8 670.40,537.2 670.62,530.0 670.84,513.9 671.06,505.1 671.28,536.5 671.50,497.5 671.72,528.3 671.94,488.8 672.16,492.4 672.38,535.8 672.60,529.7 672.82,508.7 673.04,539.6 673.26,511.1 673.48,524.5 673.70,535.8 673.92,520.2 674.14,532.4 674.36,525.9 674.58,507.8 674.80,525.4 675.02,516.3 675.24,512.1 675.46,501.2 675.68,518.3 675.90,487.7 676.12,502.9 676.34,518.7 676.56,515.1 676.78,508.9 677.00,496.3 677.22,501.6 677.44,512.6 677.66,522.0 677.88,504.6 678.10,511.4 678.32,504.8 678.54,513.8 678.76,503.1 678.98,540.1 679.20,532.5 679.42,526.7 679.64,511.6 679.86,529.1 680.08,544.0 680.30,501.5 680.52,511.1 680.74,545.6 680.96,531.8 681.18,515.1 681.40,524.5 681.62,544.3 681.84,520.5 682.06,545.0 682.28,541.4 682.50,528.5 682.72,560.8 683.00,586.0 683.16,559.4 683.38,565.8 683.60,563.6 684.00,586.0 684.00,586.0"/>
</g>
<rect x="219.5" y="440.5" width="469.0" height="181.0" fill="none" stroke="#000" stroke-width="1.3"/>
<line x1="214" y1="621.5" x2="219.5" y2="621.5" stroke="#000" stroke-width="1"/>
<line x1="208" y1="599.5" x2="219.5" y2="599.5" stroke="#000" stroke-width="1"/>
<line x1="214" y1="580.5" x2="219.5" y2="580.5" stroke="#000" stroke-width="1"/>
<line x1="208" y1="562.5" x2="219.5" y2="562.5" stroke="#000" stroke-width="1"/>
<line x1="214" y1="545.5" x2="219.5" y2="545.5" stroke="#000" stroke-width="1"/>
<line x1="208" y1="529.5" x2="219.5" y2="529.5" stroke="#000" stroke-width="1"/>
<line x1="214" y1="514.5" x2="219.5" y2="514.5" stroke="#000" stroke-width="1"/>
<line x1="208" y1="500.5" x2="219.5" y2="500.5" stroke="#000" stroke-width="1"/>
<line x1="214" y1="487.5" x2="219.5" y2="487.5" stroke="#000" stroke-width="1"/>
<line x1="208" y1="474.5" x2="219.5" y2="474.5" stroke="#000" stroke-width="1"/>
<line x1="214" y1="462.5" x2="219.5" y2="462.5" stroke="#000" stroke-width="1"/>
<line x1="208" y1="451.5" x2="219.5" y2="451.5" stroke="#000" stroke-width="1"/>
<line x1="214" y1="440.5" x2="219.5" y2="440.5" stroke="#000" stroke-width="1"/>
<text x="202.5" y="456.7" font-size="16" font-weight="normal" fill="#000" text-anchor="end" textLength="25.0" lengthAdjust="spacingAndGlyphs" >2.2</text>
<text x="202.5" y="480.0" font-size="16" font-weight="normal" fill="#000" text-anchor="end" textLength="25.0" lengthAdjust="spacingAndGlyphs" >2.0</text>
<text x="202.5" y="505.8" font-size="16" font-weight="normal" fill="#000" text-anchor="end" textLength="25.0" lengthAdjust="spacingAndGlyphs" >1.8</text>
<text x="202.5" y="534.6" font-size="16" font-weight="normal" fill="#000" text-anchor="end" textLength="25.0" lengthAdjust="spacingAndGlyphs" >1.6</text>
<text x="202.5" y="567.2" font-size="16" font-weight="normal" fill="#000" text-anchor="end" textLength="25.0" lengthAdjust="spacingAndGlyphs" >1.4</text>
<text x="202.5" y="604.9" font-size="16" font-weight="normal" fill="#000" text-anchor="end" textLength="25.0" lengthAdjust="spacingAndGlyphs" >1.2</text>
<text transform="translate(167.2,581.9) rotate(-90)" font-size="16" textLength="101.2" lengthAdjust="spacingAndGlyphs">e Tperp/Tpar</text>
<line x1="220.5" y1="621.5" x2="220.5" y2="627.0" stroke="#000" stroke-width="1"/>
<line x1="238.5" y1="621.5" x2="238.5" y2="633.0" stroke="#000" stroke-width="1"/>
<line x1="256.5" y1="621.5" x2="256.5" y2="627.0" stroke="#000" stroke-width="1"/>
<line x1="274.5" y1="621.5" x2="274.5" y2="627.0" stroke="#000" stroke-width="1"/>
<line x1="292.5" y1="621.5" x2="292.5" y2="627.0" stroke="#000" stroke-width="1"/>
<line x1="310.5" y1="621.5" x2="310.5" y2="627.0" stroke="#000" stroke-width="1"/>
<line x1="328.5" y1="621.5" x2="328.5" y2="627.0" stroke="#000" stroke-width="1"/>
<line x1="346.5" y1="621.5" x2="346.5" y2="627.0" stroke="#000" stroke-width="1"/>
<line x1="364.5" y1="621.5" x2="364.5" y2="627.0" stroke="#000" stroke-width="1"/>
<line x1="382.5" y1="621.5" x2="382.5" y2="627.0" stroke="#000" stroke-width="1"/>
<line x1="400.5" y1="621.5" x2="400.5" y2="627.0" stroke="#000" stroke-width="1"/>
<line x1="418.5" y1="621.5" x2="418.5" y2="627.0" stroke="#000" stroke-width="1"/>
<line x1="436.5" y1="621.5" x2="436.5" y2="627.0" stroke="#000" stroke-width="1"/>
<line x1="454.5" y1="621.5" x2="454.5" y2="633.0" stroke="#000" stroke-width="1"/>
<line x1="472.5" y1="621.5" x2="472.5" y2="627.0" stroke="#000" stroke-width="1"/>
<line x1="490.5" y1="621.5" x2="490.5" y2="627.0" stroke="#000" stroke-width="1"/>
<line x1="508.5" y1="621.5" x2="508.5" y2="627.0" stroke="#000" stroke-width="1"/>
<line x1="526.5" y1="621.5" x2="526.5" y2="627.0" stroke="#000" stroke-width="1"/>
<line x1="544.5" y1="621.5" x2="544.5" y2="627.0" stroke="#000" stroke-width="1"/>
<line x1="562.5" y1="621.5" x2="562.5" y2="627.0" stroke="#000" stroke-width="1"/>
<line x1="580.5" y1="621.5" x2="580.5" y2="627.0" stroke="#000" stroke-width="1"/>
<line x1="598.5" y1="621.5" x2="598.5" y2="627.0" stroke="#000" stroke-width="1"/>
<line x1="616.5" y1="621.5" x2="616.5" y2="627.0" stroke="#000" stroke-width="1"/>
<line x1="634.5" y1="621.5" x2="634.5" y2="627.0" stroke="#000" stroke-width="1"/>
<line x1="652.5" y1="621.5" x2="652.5" y2="627.0" stroke="#000" stroke-width="1"/>
<line x1="670.5" y1="621.5" x2="670.5" y2="633.0" stroke="#000" stroke-width="1"/>
<line x1="688.5" y1="621.5" x2="688.5" y2="627.0" stroke="#000" stroke-width="1"/>
<text x="261.3" y="652.9" font-size="16" font-weight="normal" fill="#000" text-anchor="end" textLength="45.2" lengthAdjust="spacingAndGlyphs" >00:00</text>
<text x="477.6" y="652.9" font-size="16" font-weight="normal" fill="#000" text-anchor="end" textLength="45.2" lengthAdjust="spacingAndGlyphs" >12:00</text>
<text x="693.3" y="652.9" font-size="16" font-weight="normal" fill="#000" text-anchor="end" textLength="45.2" lengthAdjust="spacingAndGlyphs" >00:00</text>
<text x="156.6" y="672.8" font-size="16" font-weight="normal" fill="#000" text-anchor="start" textLength="10.9" lengthAdjust="spacingAndGlyphs" >R</text>
<text x="167.4" y="677.5" font-size="11" font-weight="normal" fill="#000" text-anchor="start" textLength="6.6" lengthAdjust="spacingAndGlyphs" >E</text>
<text x="261.3" y="672.8" font-size="16" font-weight="normal" fill="#000" text-anchor="end" textLength="44.9" lengthAdjust="spacingAndGlyphs" >4.225</text>
<text x="477.6" y="672.8" font-size="16" font-weight="normal" fill="#000" text-anchor="end" textLength="44.9" lengthAdjust="spacingAndGlyphs" >5.756</text>
<text x="693.3" y="672.8" font-size="16" font-weight="normal" fill="#000" text-anchor="end" textLength="44.9" lengthAdjust="spacingAndGlyphs" >3.179</text>
<text x="175.2" y="692.7" font-size="16" font-weight="normal" fill="#000" text-anchor="end" textLength="38.1" lengthAdjust="spacingAndGlyphs" >MLat</text>
<text x="261.3" y="692.7" font-size="16" font-weight="normal" fill="#000" text-anchor="end" textLength="60.6" lengthAdjust="spacingAndGlyphs" >-10.580</text>
<text x="477.6" y="692.7" font-size="16" font-weight="normal" fill="#000" text-anchor="end" textLength="50.6" lengthAdjust="spacingAndGlyphs" >-1.544</text>
<text x="693.3" y="692.7" font-size="16" font-weight="normal" fill="#000" text-anchor="end" textLength="60.6" lengthAdjust="spacingAndGlyphs" >-16.190</text>
<text x="175.2" y="712.5" font-size="16" font-weight="normal" fill="#000" text-anchor="end" textLength="29.7" lengthAdjust="spacingAndGlyphs" >MLT</text>
<text x="261.3" y="712.5" font-size="16" font-weight="normal" fill="#000" text-anchor="end" textLength="44.9" lengthAdjust="spacingAndGlyphs" >2.247</text>
<text x="477.6" y="712.5" font-size="16" font-weight="normal" fill="#000" text-anchor="end" textLength="44.9" lengthAdjust="spacingAndGlyphs" >5.398</text>
<text x="693.3" y="712.5" font-size="16" font-weight="normal" fill="#000" text-anchor="end" textLength="44.9" lengthAdjust="spacingAndGlyphs" >8.125</text>
<text x="175.2" y="732.4" font-size="16" font-weight="normal" fill="#000" text-anchor="end" textLength="8.7" lengthAdjust="spacingAndGlyphs" >L</text>
<text x="261.3" y="732.4" font-size="16" font-weight="normal" fill="#000" text-anchor="end" textLength="44.9" lengthAdjust="spacingAndGlyphs" >4.373</text>
<text x="477.6" y="732.4" font-size="16" font-weight="normal" fill="#000" text-anchor="end" textLength="44.9" lengthAdjust="spacingAndGlyphs" >5.760</text>
<text x="693.3" y="732.4" font-size="16" font-weight="normal" fill="#000" text-anchor="end" textLength="44.9" lengthAdjust="spacingAndGlyphs" >3.447</text>
<text x="251.6" y="756.8" font-size="16" font-weight="normal" fill="#000" text-anchor="start" textLength="403.1" lengthAdjust="spacingAndGlyphs" >2012-12-01 (336) 23:00 to 2012-12-03 (338) 01:00</text>
<path d="M346.5 447.5 L346.5 363.5 Q346.5 359.0 351 359.0 L587 359.0 Q591.5 359.0 591.5 363.5 L591.5 447.5 Z" fill="url(#dlgT)" stroke="#bdbdbd" stroke-width="1"/>
<rect x="346.5" y="384" width="245" height="63.0" fill="#c8c8c8"/>
<rect x="349" y="384" width="240" height="61" fill="#fcfcfc" />
<path d="M359.5 369 L367.5 369 L363.5 374.5 Z" fill="#8f8f8f"/>
<text x="411.5" y="377.3" font-size="13" font-weight="bold" fill="#707070" text-anchor="start" textLength="114.5" lengthAdjust="spacingAndGlyphs" >Progress Monitor</text>
<path d="M569.5 369 L576.5 376 M576.5 369 L569.5 376" stroke="#a0a0a0" stroke-width="2"/>
<text x="414.5" y="396.5" font-size="15" font-weight="bold" fill="#231f2a" text-anchor="start" textLength="109.0" lengthAdjust="spacingAndGlyphs" >running batch</text>
<text x="362.5" y="409.0" font-size="7.8" font-weight="bold" fill="#231f2a" text-anchor="start" textLength="215.0" lengthAdjust="spacingAndGlyphs" >write /hom...walk3/product_20121224_12.png</text>
<rect x="349.5" y="411.5" width="219" height="19" fill="#eeeeee" stroke="#7a8a99" stroke-width="1"/>
<rect x="350.5" y="412.5" width="167.5" height="17.5" fill="#a3b8cc" />
<line x1="350" y1="412.5" x2="518" y2="412.5" stroke="#6382bf" stroke-width="1"/>
<rect x="569.5" y="411.5" width="19.5" height="19" fill="#d5e1ee" stroke="#7a8a99" stroke-width="1"/>
<rect x="572.5" y="414.2" width="13.5" height="13.2" rx="2.2" fill="#df3a4a" stroke="#b52030" stroke-width="0.8"/>
<path d="M576.2 418 L582.4 423.8 M582.4 418 L576.2 423.8" stroke="#ffffff" stroke-width="2.2"/>
<text x="377.0" y="442.7" font-size="13" font-weight="bold" fill="#231f2a" text-anchor="start" textLength="185.0" lengthAdjust="spacingAndGlyphs" >48/62 (45.2/min, eta 19.9 s)</text></svg>
</body></html>
